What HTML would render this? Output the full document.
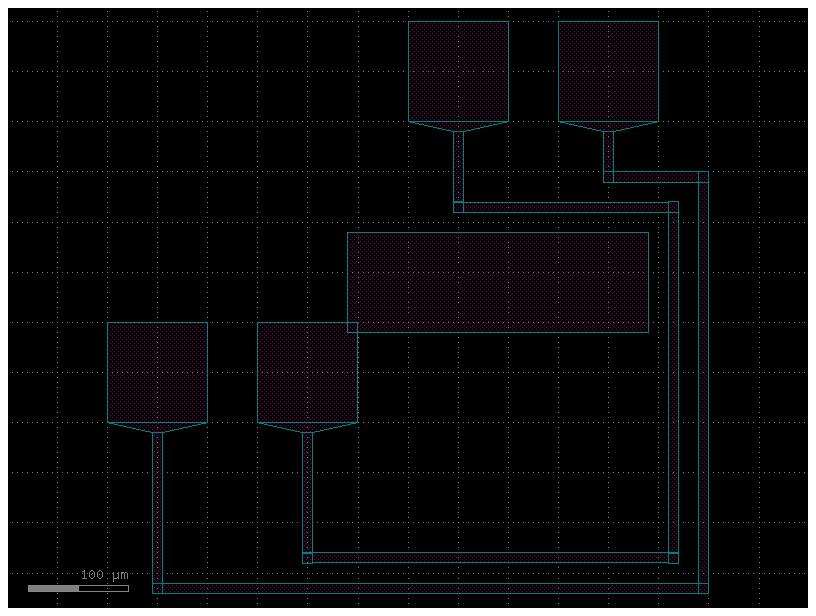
<!DOCTYPE html>
<html><head><meta charset="utf-8"><title>layout</title><style>html,body{margin:0;padding:0;background:#fff;width:816px;height:616px;overflow:hidden;font-family:"Liberation Sans",sans-serif;}</style></head><body><svg width="816" height="616" viewBox="0 0 816 616" shape-rendering="crispEdges" style="position:absolute;left:0;top:0"><defs><pattern id="st" patternUnits="userSpaceOnUse" x="0" y="0" width="4" height="4"><rect x="2" y="3" width="1" height="1" fill="#800057"/><rect x="0" y="1" width="1" height="1" fill="#800057"/></pattern></defs><rect x="0" y="0" width="816" height="616" fill="#ffffff"/><rect x="8" y="8" width="800" height="600" fill="#000000"/><path fill="#808080" d="M57 11h1v1h-1zM107 11h1v1h-1zM157 11h1v1h-1zM207 11h1v1h-1zM257 11h1v1h-1zM307 11h1v1h-1zM358 11h1v1h-1zM408 11h1v1h-1zM458 11h1v1h-1zM508 11h1v1h-1zM558 11h1v1h-1zM608 11h1v1h-1zM658 11h1v1h-1zM708 11h1v1h-1zM759 11h1v1h-1zM57 16h1v1h-1zM107 16h1v1h-1zM157 16h1v1h-1zM207 16h1v1h-1zM257 16h1v1h-1zM307 16h1v1h-1zM358 16h1v1h-1zM408 16h1v1h-1zM458 16h1v1h-1zM508 16h1v1h-1zM558 16h1v1h-1zM608 16h1v1h-1zM658 16h1v1h-1zM708 16h1v1h-1zM759 16h1v1h-1zM12 21h1v1h-1zM17 21h1v1h-1zM22 21h1v1h-1zM27 21h1v1h-1zM32 21h1v1h-1zM37 21h1v1h-1zM42 21h1v1h-1zM47 21h1v1h-1zM52 21h1v1h-1zM57 21h1v1h-1zM62 21h1v1h-1zM67 21h1v1h-1zM72 21h1v1h-1zM77 21h1v1h-1zM82 21h1v1h-1zM87 21h1v1h-1zM92 21h1v1h-1zM97 21h1v1h-1zM102 21h1v1h-1zM107 21h1v1h-1zM112 21h1v1h-1zM117 21h1v1h-1zM122 21h1v1h-1zM127 21h1v1h-1zM132 21h1v1h-1zM137 21h1v1h-1zM142 21h1v1h-1zM147 21h1v1h-1zM152 21h1v1h-1zM157 21h1v1h-1zM162 21h1v1h-1zM167 21h1v1h-1zM172 21h1v1h-1zM177 21h1v1h-1zM182 21h1v1h-1zM187 21h1v1h-1zM192 21h1v1h-1zM197 21h1v1h-1zM202 21h1v1h-1zM207 21h1v1h-1zM212 21h1v1h-1zM217 21h1v1h-1zM222 21h1v1h-1zM227 21h1v1h-1zM232 21h1v1h-1zM237 21h1v1h-1zM242 21h1v1h-1zM247 21h1v1h-1zM252 21h1v1h-1zM257 21h1v1h-1zM262 21h1v1h-1zM267 21h1v1h-1zM272 21h1v1h-1zM277 21h1v1h-1zM282 21h1v1h-1zM287 21h1v1h-1zM292 21h1v1h-1zM297 21h1v1h-1zM302 21h1v1h-1zM307 21h1v1h-1zM312 21h1v1h-1zM317 21h1v1h-1zM322 21h1v1h-1zM327 21h1v1h-1zM332 21h1v1h-1zM337 21h1v1h-1zM342 21h1v1h-1zM347 21h1v1h-1zM352 21h1v1h-1zM358 21h1v1h-1zM363 21h1v1h-1zM368 21h1v1h-1zM373 21h1v1h-1zM378 21h1v1h-1zM383 21h1v1h-1zM388 21h1v1h-1zM393 21h1v1h-1zM398 21h1v1h-1zM403 21h1v1h-1zM408 21h1v1h-1zM413 21h1v1h-1zM418 21h1v1h-1zM423 21h1v1h-1zM428 21h1v1h-1zM433 21h1v1h-1zM438 21h1v1h-1zM443 21h1v1h-1zM448 21h1v1h-1zM453 21h1v1h-1zM458 21h1v1h-1zM463 21h1v1h-1zM468 21h1v1h-1zM473 21h1v1h-1zM478 21h1v1h-1zM483 21h1v1h-1zM488 21h1v1h-1zM493 21h1v1h-1zM498 21h1v1h-1zM503 21h1v1h-1zM508 21h1v1h-1zM513 21h1v1h-1zM518 21h1v1h-1zM523 21h1v1h-1zM528 21h1v1h-1zM533 21h1v1h-1zM538 21h1v1h-1zM543 21h1v1h-1zM548 21h1v1h-1zM553 21h1v1h-1zM558 21h1v1h-1zM563 21h1v1h-1zM568 21h1v1h-1zM573 21h1v1h-1zM578 21h1v1h-1zM583 21h1v1h-1zM588 21h1v1h-1zM593 21h1v1h-1zM598 21h1v1h-1zM603 21h1v1h-1zM608 21h1v1h-1zM613 21h1v1h-1zM618 21h1v1h-1zM623 21h1v1h-1zM628 21h1v1h-1zM633 21h1v1h-1zM638 21h1v1h-1zM643 21h1v1h-1zM648 21h1v1h-1zM653 21h1v1h-1zM658 21h1v1h-1zM663 21h1v1h-1zM668 21h1v1h-1zM673 21h1v1h-1zM678 21h1v1h-1zM683 21h1v1h-1zM688 21h1v1h-1zM693 21h1v1h-1zM698 21h1v1h-1zM703 21h1v1h-1zM708 21h1v1h-1zM713 21h1v1h-1zM718 21h1v1h-1zM723 21h1v1h-1zM728 21h1v1h-1zM733 21h1v1h-1zM738 21h1v1h-1zM743 21h1v1h-1zM748 21h1v1h-1zM753 21h1v1h-1zM759 21h1v1h-1zM764 21h1v1h-1zM769 21h1v1h-1zM774 21h1v1h-1zM779 21h1v1h-1zM784 21h1v1h-1zM789 21h1v1h-1zM794 21h1v1h-1zM799 21h1v1h-1zM804 21h1v1h-1zM57 26h1v1h-1zM107 26h1v1h-1zM157 26h1v1h-1zM207 26h1v1h-1zM257 26h1v1h-1zM307 26h1v1h-1zM358 26h1v1h-1zM408 26h1v1h-1zM458 26h1v1h-1zM508 26h1v1h-1zM558 26h1v1h-1zM608 26h1v1h-1zM658 26h1v1h-1zM708 26h1v1h-1zM759 26h1v1h-1zM57 31h1v1h-1zM107 31h1v1h-1zM157 31h1v1h-1zM207 31h1v1h-1zM257 31h1v1h-1zM307 31h1v1h-1zM358 31h1v1h-1zM408 31h1v1h-1zM458 31h1v1h-1zM508 31h1v1h-1zM558 31h1v1h-1zM608 31h1v1h-1zM658 31h1v1h-1zM708 31h1v1h-1zM759 31h1v1h-1zM57 36h1v1h-1zM107 36h1v1h-1zM157 36h1v1h-1zM207 36h1v1h-1zM257 36h1v1h-1zM307 36h1v1h-1zM358 36h1v1h-1zM408 36h1v1h-1zM458 36h1v1h-1zM508 36h1v1h-1zM558 36h1v1h-1zM608 36h1v1h-1zM658 36h1v1h-1zM708 36h1v1h-1zM759 36h1v1h-1zM57 41h1v1h-1zM107 41h1v1h-1zM157 41h1v1h-1zM207 41h1v1h-1zM257 41h1v1h-1zM307 41h1v1h-1zM358 41h1v1h-1zM408 41h1v1h-1zM458 41h1v1h-1zM508 41h1v1h-1zM558 41h1v1h-1zM608 41h1v1h-1zM658 41h1v1h-1zM708 41h1v1h-1zM759 41h1v1h-1zM57 46h1v1h-1zM107 46h1v1h-1zM157 46h1v1h-1zM207 46h1v1h-1zM257 46h1v1h-1zM307 46h1v1h-1zM358 46h1v1h-1zM408 46h1v1h-1zM458 46h1v1h-1zM508 46h1v1h-1zM558 46h1v1h-1zM608 46h1v1h-1zM658 46h1v1h-1zM708 46h1v1h-1zM759 46h1v1h-1zM57 51h1v1h-1zM107 51h1v1h-1zM157 51h1v1h-1zM207 51h1v1h-1zM257 51h1v1h-1zM307 51h1v1h-1zM358 51h1v1h-1zM408 51h1v1h-1zM458 51h1v1h-1zM508 51h1v1h-1zM558 51h1v1h-1zM608 51h1v1h-1zM658 51h1v1h-1zM708 51h1v1h-1zM759 51h1v1h-1zM57 56h1v1h-1zM107 56h1v1h-1zM157 56h1v1h-1zM207 56h1v1h-1zM257 56h1v1h-1zM307 56h1v1h-1zM358 56h1v1h-1zM408 56h1v1h-1zM458 56h1v1h-1zM508 56h1v1h-1zM558 56h1v1h-1zM608 56h1v1h-1zM658 56h1v1h-1zM708 56h1v1h-1zM759 56h1v1h-1zM57 61h1v1h-1zM107 61h1v1h-1zM157 61h1v1h-1zM207 61h1v1h-1zM257 61h1v1h-1zM307 61h1v1h-1zM358 61h1v1h-1zM408 61h1v1h-1zM458 61h1v1h-1zM508 61h1v1h-1zM558 61h1v1h-1zM608 61h1v1h-1zM658 61h1v1h-1zM708 61h1v1h-1zM759 61h1v1h-1zM57 66h1v1h-1zM107 66h1v1h-1zM157 66h1v1h-1zM207 66h1v1h-1zM257 66h1v1h-1zM307 66h1v1h-1zM358 66h1v1h-1zM408 66h1v1h-1zM458 66h1v1h-1zM508 66h1v1h-1zM558 66h1v1h-1zM608 66h1v1h-1zM658 66h1v1h-1zM708 66h1v1h-1zM759 66h1v1h-1zM12 71h1v1h-1zM17 71h1v1h-1zM22 71h1v1h-1zM27 71h1v1h-1zM32 71h1v1h-1zM37 71h1v1h-1zM42 71h1v1h-1zM47 71h1v1h-1zM52 71h1v1h-1zM57 71h1v1h-1zM62 71h1v1h-1zM67 71h1v1h-1zM72 71h1v1h-1zM77 71h1v1h-1zM82 71h1v1h-1zM87 71h1v1h-1zM92 71h1v1h-1zM97 71h1v1h-1zM102 71h1v1h-1zM107 71h1v1h-1zM112 71h1v1h-1zM117 71h1v1h-1zM122 71h1v1h-1zM127 71h1v1h-1zM132 71h1v1h-1zM137 71h1v1h-1zM142 71h1v1h-1zM147 71h1v1h-1zM152 71h1v1h-1zM157 71h1v1h-1zM162 71h1v1h-1zM167 71h1v1h-1zM172 71h1v1h-1zM177 71h1v1h-1zM182 71h1v1h-1zM187 71h1v1h-1zM192 71h1v1h-1zM197 71h1v1h-1zM202 71h1v1h-1zM207 71h1v1h-1zM212 71h1v1h-1zM217 71h1v1h-1zM222 71h1v1h-1zM227 71h1v1h-1zM232 71h1v1h-1zM237 71h1v1h-1zM242 71h1v1h-1zM247 71h1v1h-1zM252 71h1v1h-1zM257 71h1v1h-1zM262 71h1v1h-1zM267 71h1v1h-1zM272 71h1v1h-1zM277 71h1v1h-1zM282 71h1v1h-1zM287 71h1v1h-1zM292 71h1v1h-1zM297 71h1v1h-1zM302 71h1v1h-1zM307 71h1v1h-1zM312 71h1v1h-1zM317 71h1v1h-1zM322 71h1v1h-1zM327 71h1v1h-1zM332 71h1v1h-1zM337 71h1v1h-1zM342 71h1v1h-1zM347 71h1v1h-1zM352 71h1v1h-1zM358 71h1v1h-1zM363 71h1v1h-1zM368 71h1v1h-1zM373 71h1v1h-1zM378 71h1v1h-1zM383 71h1v1h-1zM388 71h1v1h-1zM393 71h1v1h-1zM398 71h1v1h-1zM403 71h1v1h-1zM408 71h1v1h-1zM413 71h1v1h-1zM418 71h1v1h-1zM423 71h1v1h-1zM428 71h1v1h-1zM433 71h1v1h-1zM438 71h1v1h-1zM443 71h1v1h-1zM448 71h1v1h-1zM453 71h1v1h-1zM458 71h1v1h-1zM463 71h1v1h-1zM468 71h1v1h-1zM473 71h1v1h-1zM478 71h1v1h-1zM483 71h1v1h-1zM488 71h1v1h-1zM493 71h1v1h-1zM498 71h1v1h-1zM503 71h1v1h-1zM508 71h1v1h-1zM513 71h1v1h-1zM518 71h1v1h-1zM523 71h1v1h-1zM528 71h1v1h-1zM533 71h1v1h-1zM538 71h1v1h-1zM543 71h1v1h-1zM548 71h1v1h-1zM553 71h1v1h-1zM558 71h1v1h-1zM563 71h1v1h-1zM568 71h1v1h-1zM573 71h1v1h-1zM578 71h1v1h-1zM583 71h1v1h-1zM588 71h1v1h-1zM593 71h1v1h-1zM598 71h1v1h-1zM603 71h1v1h-1zM608 71h1v1h-1zM613 71h1v1h-1zM618 71h1v1h-1zM623 71h1v1h-1zM628 71h1v1h-1zM633 71h1v1h-1zM638 71h1v1h-1zM643 71h1v1h-1zM648 71h1v1h-1zM653 71h1v1h-1zM658 71h1v1h-1zM663 71h1v1h-1zM668 71h1v1h-1zM673 71h1v1h-1zM678 71h1v1h-1zM683 71h1v1h-1zM688 71h1v1h-1zM693 71h1v1h-1zM698 71h1v1h-1zM703 71h1v1h-1zM708 71h1v1h-1zM713 71h1v1h-1zM718 71h1v1h-1zM723 71h1v1h-1zM728 71h1v1h-1zM733 71h1v1h-1zM738 71h1v1h-1zM743 71h1v1h-1zM748 71h1v1h-1zM753 71h1v1h-1zM759 71h1v1h-1zM764 71h1v1h-1zM769 71h1v1h-1zM774 71h1v1h-1zM779 71h1v1h-1zM784 71h1v1h-1zM789 71h1v1h-1zM794 71h1v1h-1zM799 71h1v1h-1zM804 71h1v1h-1zM57 76h1v1h-1zM107 76h1v1h-1zM157 76h1v1h-1zM207 76h1v1h-1zM257 76h1v1h-1zM307 76h1v1h-1zM358 76h1v1h-1zM408 76h1v1h-1zM458 76h1v1h-1zM508 76h1v1h-1zM558 76h1v1h-1zM608 76h1v1h-1zM658 76h1v1h-1zM708 76h1v1h-1zM759 76h1v1h-1zM57 81h1v1h-1zM107 81h1v1h-1zM157 81h1v1h-1zM207 81h1v1h-1zM257 81h1v1h-1zM307 81h1v1h-1zM358 81h1v1h-1zM408 81h1v1h-1zM458 81h1v1h-1zM508 81h1v1h-1zM558 81h1v1h-1zM608 81h1v1h-1zM658 81h1v1h-1zM708 81h1v1h-1zM759 81h1v1h-1zM57 86h1v1h-1zM107 86h1v1h-1zM157 86h1v1h-1zM207 86h1v1h-1zM257 86h1v1h-1zM307 86h1v1h-1zM358 86h1v1h-1zM408 86h1v1h-1zM458 86h1v1h-1zM508 86h1v1h-1zM558 86h1v1h-1zM608 86h1v1h-1zM658 86h1v1h-1zM708 86h1v1h-1zM759 86h1v1h-1zM57 91h1v1h-1zM107 91h1v1h-1zM157 91h1v1h-1zM207 91h1v1h-1zM257 91h1v1h-1zM307 91h1v1h-1zM358 91h1v1h-1zM408 91h1v1h-1zM458 91h1v1h-1zM508 91h1v1h-1zM558 91h1v1h-1zM608 91h1v1h-1zM658 91h1v1h-1zM708 91h1v1h-1zM759 91h1v1h-1zM57 96h1v1h-1zM107 96h1v1h-1zM157 96h1v1h-1zM207 96h1v1h-1zM257 96h1v1h-1zM307 96h1v1h-1zM358 96h1v1h-1zM408 96h1v1h-1zM458 96h1v1h-1zM508 96h1v1h-1zM558 96h1v1h-1zM608 96h1v1h-1zM658 96h1v1h-1zM708 96h1v1h-1zM759 96h1v1h-1zM57 101h1v1h-1zM107 101h1v1h-1zM157 101h1v1h-1zM207 101h1v1h-1zM257 101h1v1h-1zM307 101h1v1h-1zM358 101h1v1h-1zM408 101h1v1h-1zM458 101h1v1h-1zM508 101h1v1h-1zM558 101h1v1h-1zM608 101h1v1h-1zM658 101h1v1h-1zM708 101h1v1h-1zM759 101h1v1h-1zM57 106h1v1h-1zM107 106h1v1h-1zM157 106h1v1h-1zM207 106h1v1h-1zM257 106h1v1h-1zM307 106h1v1h-1zM358 106h1v1h-1zM408 106h1v1h-1zM458 106h1v1h-1zM508 106h1v1h-1zM558 106h1v1h-1zM608 106h1v1h-1zM658 106h1v1h-1zM708 106h1v1h-1zM759 106h1v1h-1zM57 111h1v1h-1zM107 111h1v1h-1zM157 111h1v1h-1zM207 111h1v1h-1zM257 111h1v1h-1zM307 111h1v1h-1zM358 111h1v1h-1zM408 111h1v1h-1zM458 111h1v1h-1zM508 111h1v1h-1zM558 111h1v1h-1zM608 111h1v1h-1zM658 111h1v1h-1zM708 111h1v1h-1zM759 111h1v1h-1zM57 116h1v1h-1zM107 116h1v1h-1zM157 116h1v1h-1zM207 116h1v1h-1zM257 116h1v1h-1zM307 116h1v1h-1zM358 116h1v1h-1zM408 116h1v1h-1zM458 116h1v1h-1zM508 116h1v1h-1zM558 116h1v1h-1zM608 116h1v1h-1zM658 116h1v1h-1zM708 116h1v1h-1zM759 116h1v1h-1zM12 121h1v1h-1zM17 121h1v1h-1zM22 121h1v1h-1zM27 121h1v1h-1zM32 121h1v1h-1zM37 121h1v1h-1zM42 121h1v1h-1zM47 121h1v1h-1zM52 121h1v1h-1zM57 121h1v1h-1zM62 121h1v1h-1zM67 121h1v1h-1zM72 121h1v1h-1zM77 121h1v1h-1zM82 121h1v1h-1zM87 121h1v1h-1zM92 121h1v1h-1zM97 121h1v1h-1zM102 121h1v1h-1zM107 121h1v1h-1zM112 121h1v1h-1zM117 121h1v1h-1zM122 121h1v1h-1zM127 121h1v1h-1zM132 121h1v1h-1zM137 121h1v1h-1zM142 121h1v1h-1zM147 121h1v1h-1zM152 121h1v1h-1zM157 121h1v1h-1zM162 121h1v1h-1zM167 121h1v1h-1zM172 121h1v1h-1zM177 121h1v1h-1zM182 121h1v1h-1zM187 121h1v1h-1zM192 121h1v1h-1zM197 121h1v1h-1zM202 121h1v1h-1zM207 121h1v1h-1zM212 121h1v1h-1zM217 121h1v1h-1zM222 121h1v1h-1zM227 121h1v1h-1zM232 121h1v1h-1zM237 121h1v1h-1zM242 121h1v1h-1zM247 121h1v1h-1zM252 121h1v1h-1zM257 121h1v1h-1zM262 121h1v1h-1zM267 121h1v1h-1zM272 121h1v1h-1zM277 121h1v1h-1zM282 121h1v1h-1zM287 121h1v1h-1zM292 121h1v1h-1zM297 121h1v1h-1zM302 121h1v1h-1zM307 121h1v1h-1zM312 121h1v1h-1zM317 121h1v1h-1zM322 121h1v1h-1zM327 121h1v1h-1zM332 121h1v1h-1zM337 121h1v1h-1zM342 121h1v1h-1zM347 121h1v1h-1zM352 121h1v1h-1zM358 121h1v1h-1zM363 121h1v1h-1zM368 121h1v1h-1zM373 121h1v1h-1zM378 121h1v1h-1zM383 121h1v1h-1zM388 121h1v1h-1zM393 121h1v1h-1zM398 121h1v1h-1zM403 121h1v1h-1zM408 121h1v1h-1zM413 121h1v1h-1zM418 121h1v1h-1zM423 121h1v1h-1zM428 121h1v1h-1zM433 121h1v1h-1zM438 121h1v1h-1zM443 121h1v1h-1zM448 121h1v1h-1zM453 121h1v1h-1zM458 121h1v1h-1zM463 121h1v1h-1zM468 121h1v1h-1zM473 121h1v1h-1zM478 121h1v1h-1zM483 121h1v1h-1zM488 121h1v1h-1zM493 121h1v1h-1zM498 121h1v1h-1zM503 121h1v1h-1zM508 121h1v1h-1zM513 121h1v1h-1zM518 121h1v1h-1zM523 121h1v1h-1zM528 121h1v1h-1zM533 121h1v1h-1zM538 121h1v1h-1zM543 121h1v1h-1zM548 121h1v1h-1zM553 121h1v1h-1zM558 121h1v1h-1zM563 121h1v1h-1zM568 121h1v1h-1zM573 121h1v1h-1zM578 121h1v1h-1zM583 121h1v1h-1zM588 121h1v1h-1zM593 121h1v1h-1zM598 121h1v1h-1zM603 121h1v1h-1zM608 121h1v1h-1zM613 121h1v1h-1zM618 121h1v1h-1zM623 121h1v1h-1zM628 121h1v1h-1zM633 121h1v1h-1zM638 121h1v1h-1zM643 121h1v1h-1zM648 121h1v1h-1zM653 121h1v1h-1zM658 121h1v1h-1zM663 121h1v1h-1zM668 121h1v1h-1zM673 121h1v1h-1zM678 121h1v1h-1zM683 121h1v1h-1zM688 121h1v1h-1zM693 121h1v1h-1zM698 121h1v1h-1zM703 121h1v1h-1zM708 121h1v1h-1zM713 121h1v1h-1zM718 121h1v1h-1zM723 121h1v1h-1zM728 121h1v1h-1zM733 121h1v1h-1zM738 121h1v1h-1zM743 121h1v1h-1zM748 121h1v1h-1zM753 121h1v1h-1zM759 121h1v1h-1zM764 121h1v1h-1zM769 121h1v1h-1zM774 121h1v1h-1zM779 121h1v1h-1zM784 121h1v1h-1zM789 121h1v1h-1zM794 121h1v1h-1zM799 121h1v1h-1zM804 121h1v1h-1zM57 126h1v1h-1zM107 126h1v1h-1zM157 126h1v1h-1zM207 126h1v1h-1zM257 126h1v1h-1zM307 126h1v1h-1zM358 126h1v1h-1zM408 126h1v1h-1zM458 126h1v1h-1zM508 126h1v1h-1zM558 126h1v1h-1zM608 126h1v1h-1zM658 126h1v1h-1zM708 126h1v1h-1zM759 126h1v1h-1zM57 131h1v1h-1zM107 131h1v1h-1zM157 131h1v1h-1zM207 131h1v1h-1zM257 131h1v1h-1zM307 131h1v1h-1zM358 131h1v1h-1zM408 131h1v1h-1zM458 131h1v1h-1zM508 131h1v1h-1zM558 131h1v1h-1zM608 131h1v1h-1zM658 131h1v1h-1zM708 131h1v1h-1zM759 131h1v1h-1zM57 136h1v1h-1zM107 136h1v1h-1zM157 136h1v1h-1zM207 136h1v1h-1zM257 136h1v1h-1zM307 136h1v1h-1zM358 136h1v1h-1zM408 136h1v1h-1zM458 136h1v1h-1zM508 136h1v1h-1zM558 136h1v1h-1zM608 136h1v1h-1zM658 136h1v1h-1zM708 136h1v1h-1zM759 136h1v1h-1zM57 141h1v1h-1zM107 141h1v1h-1zM157 141h1v1h-1zM207 141h1v1h-1zM257 141h1v1h-1zM307 141h1v1h-1zM358 141h1v1h-1zM408 141h1v1h-1zM458 141h1v1h-1zM508 141h1v1h-1zM558 141h1v1h-1zM608 141h1v1h-1zM658 141h1v1h-1zM708 141h1v1h-1zM759 141h1v1h-1zM57 146h1v1h-1zM107 146h1v1h-1zM157 146h1v1h-1zM207 146h1v1h-1zM257 146h1v1h-1zM307 146h1v1h-1zM358 146h1v1h-1zM408 146h1v1h-1zM458 146h1v1h-1zM508 146h1v1h-1zM558 146h1v1h-1zM608 146h1v1h-1zM658 146h1v1h-1zM708 146h1v1h-1zM759 146h1v1h-1zM57 151h1v1h-1zM107 151h1v1h-1zM157 151h1v1h-1zM207 151h1v1h-1zM257 151h1v1h-1zM307 151h1v1h-1zM358 151h1v1h-1zM408 151h1v1h-1zM458 151h1v1h-1zM508 151h1v1h-1zM558 151h1v1h-1zM608 151h1v1h-1zM658 151h1v1h-1zM708 151h1v1h-1zM759 151h1v1h-1zM57 156h1v1h-1zM107 156h1v1h-1zM157 156h1v1h-1zM207 156h1v1h-1zM257 156h1v1h-1zM307 156h1v1h-1zM358 156h1v1h-1zM408 156h1v1h-1zM458 156h1v1h-1zM508 156h1v1h-1zM558 156h1v1h-1zM608 156h1v1h-1zM658 156h1v1h-1zM708 156h1v1h-1zM759 156h1v1h-1zM57 161h1v1h-1zM107 161h1v1h-1zM157 161h1v1h-1zM207 161h1v1h-1zM257 161h1v1h-1zM307 161h1v1h-1zM358 161h1v1h-1zM408 161h1v1h-1zM458 161h1v1h-1zM508 161h1v1h-1zM558 161h1v1h-1zM608 161h1v1h-1zM658 161h1v1h-1zM708 161h1v1h-1zM759 161h1v1h-1zM57 166h1v1h-1zM107 166h1v1h-1zM157 166h1v1h-1zM207 166h1v1h-1zM257 166h1v1h-1zM307 166h1v1h-1zM358 166h1v1h-1zM408 166h1v1h-1zM458 166h1v1h-1zM508 166h1v1h-1zM558 166h1v1h-1zM608 166h1v1h-1zM658 166h1v1h-1zM708 166h1v1h-1zM759 166h1v1h-1zM12 171h1v1h-1zM17 171h1v1h-1zM22 171h1v1h-1zM27 171h1v1h-1zM32 171h1v1h-1zM37 171h1v1h-1zM42 171h1v1h-1zM47 171h1v1h-1zM52 171h1v1h-1zM57 171h1v1h-1zM62 171h1v1h-1zM67 171h1v1h-1zM72 171h1v1h-1zM77 171h1v1h-1zM82 171h1v1h-1zM87 171h1v1h-1zM92 171h1v1h-1zM97 171h1v1h-1zM102 171h1v1h-1zM107 171h1v1h-1zM112 171h1v1h-1zM117 171h1v1h-1zM122 171h1v1h-1zM127 171h1v1h-1zM132 171h1v1h-1zM137 171h1v1h-1zM142 171h1v1h-1zM147 171h1v1h-1zM152 171h1v1h-1zM157 171h1v1h-1zM162 171h1v1h-1zM167 171h1v1h-1zM172 171h1v1h-1zM177 171h1v1h-1zM182 171h1v1h-1zM187 171h1v1h-1zM192 171h1v1h-1zM197 171h1v1h-1zM202 171h1v1h-1zM207 171h1v1h-1zM212 171h1v1h-1zM217 171h1v1h-1zM222 171h1v1h-1zM227 171h1v1h-1zM232 171h1v1h-1zM237 171h1v1h-1zM242 171h1v1h-1zM247 171h1v1h-1zM252 171h1v1h-1zM257 171h1v1h-1zM262 171h1v1h-1zM267 171h1v1h-1zM272 171h1v1h-1zM277 171h1v1h-1zM282 171h1v1h-1zM287 171h1v1h-1zM292 171h1v1h-1zM297 171h1v1h-1zM302 171h1v1h-1zM307 171h1v1h-1zM312 171h1v1h-1zM317 171h1v1h-1zM322 171h1v1h-1zM327 171h1v1h-1zM332 171h1v1h-1zM337 171h1v1h-1zM342 171h1v1h-1zM347 171h1v1h-1zM352 171h1v1h-1zM358 171h1v1h-1zM363 171h1v1h-1zM368 171h1v1h-1zM373 171h1v1h-1zM378 171h1v1h-1zM383 171h1v1h-1zM388 171h1v1h-1zM393 171h1v1h-1zM398 171h1v1h-1zM403 171h1v1h-1zM408 171h1v1h-1zM413 171h1v1h-1zM418 171h1v1h-1zM423 171h1v1h-1zM428 171h1v1h-1zM433 171h1v1h-1zM438 171h1v1h-1zM443 171h1v1h-1zM448 171h1v1h-1zM453 171h1v1h-1zM458 171h1v1h-1zM463 171h1v1h-1zM468 171h1v1h-1zM473 171h1v1h-1zM478 171h1v1h-1zM483 171h1v1h-1zM488 171h1v1h-1zM493 171h1v1h-1zM498 171h1v1h-1zM503 171h1v1h-1zM508 171h1v1h-1zM513 171h1v1h-1zM518 171h1v1h-1zM523 171h1v1h-1zM528 171h1v1h-1zM533 171h1v1h-1zM538 171h1v1h-1zM543 171h1v1h-1zM548 171h1v1h-1zM553 171h1v1h-1zM558 171h1v1h-1zM563 171h1v1h-1zM568 171h1v1h-1zM573 171h1v1h-1zM578 171h1v1h-1zM583 171h1v1h-1zM588 171h1v1h-1zM593 171h1v1h-1zM598 171h1v1h-1zM603 171h1v1h-1zM608 171h1v1h-1zM613 171h1v1h-1zM618 171h1v1h-1zM623 171h1v1h-1zM628 171h1v1h-1zM633 171h1v1h-1zM638 171h1v1h-1zM643 171h1v1h-1zM648 171h1v1h-1zM653 171h1v1h-1zM658 171h1v1h-1zM663 171h1v1h-1zM668 171h1v1h-1zM673 171h1v1h-1zM678 171h1v1h-1zM683 171h1v1h-1zM688 171h1v1h-1zM693 171h1v1h-1zM698 171h1v1h-1zM703 171h1v1h-1zM708 171h1v1h-1zM713 171h1v1h-1zM718 171h1v1h-1zM723 171h1v1h-1zM728 171h1v1h-1zM733 171h1v1h-1zM738 171h1v1h-1zM743 171h1v1h-1zM748 171h1v1h-1zM753 171h1v1h-1zM759 171h1v1h-1zM764 171h1v1h-1zM769 171h1v1h-1zM774 171h1v1h-1zM779 171h1v1h-1zM784 171h1v1h-1zM789 171h1v1h-1zM794 171h1v1h-1zM799 171h1v1h-1zM804 171h1v1h-1zM57 177h1v1h-1zM107 177h1v1h-1zM157 177h1v1h-1zM207 177h1v1h-1zM257 177h1v1h-1zM307 177h1v1h-1zM358 177h1v1h-1zM408 177h1v1h-1zM458 177h1v1h-1zM508 177h1v1h-1zM558 177h1v1h-1zM608 177h1v1h-1zM658 177h1v1h-1zM708 177h1v1h-1zM759 177h1v1h-1zM57 182h1v1h-1zM107 182h1v1h-1zM157 182h1v1h-1zM207 182h1v1h-1zM257 182h1v1h-1zM307 182h1v1h-1zM358 182h1v1h-1zM408 182h1v1h-1zM458 182h1v1h-1zM508 182h1v1h-1zM558 182h1v1h-1zM608 182h1v1h-1zM658 182h1v1h-1zM708 182h1v1h-1zM759 182h1v1h-1zM57 187h1v1h-1zM107 187h1v1h-1zM157 187h1v1h-1zM207 187h1v1h-1zM257 187h1v1h-1zM307 187h1v1h-1zM358 187h1v1h-1zM408 187h1v1h-1zM458 187h1v1h-1zM508 187h1v1h-1zM558 187h1v1h-1zM608 187h1v1h-1zM658 187h1v1h-1zM708 187h1v1h-1zM759 187h1v1h-1zM57 192h1v1h-1zM107 192h1v1h-1zM157 192h1v1h-1zM207 192h1v1h-1zM257 192h1v1h-1zM307 192h1v1h-1zM358 192h1v1h-1zM408 192h1v1h-1zM458 192h1v1h-1zM508 192h1v1h-1zM558 192h1v1h-1zM608 192h1v1h-1zM658 192h1v1h-1zM708 192h1v1h-1zM759 192h1v1h-1zM57 197h1v1h-1zM107 197h1v1h-1zM157 197h1v1h-1zM207 197h1v1h-1zM257 197h1v1h-1zM307 197h1v1h-1zM358 197h1v1h-1zM408 197h1v1h-1zM458 197h1v1h-1zM508 197h1v1h-1zM558 197h1v1h-1zM608 197h1v1h-1zM658 197h1v1h-1zM708 197h1v1h-1zM759 197h1v1h-1zM57 202h1v1h-1zM107 202h1v1h-1zM157 202h1v1h-1zM207 202h1v1h-1zM257 202h1v1h-1zM307 202h1v1h-1zM358 202h1v1h-1zM408 202h1v1h-1zM458 202h1v1h-1zM508 202h1v1h-1zM558 202h1v1h-1zM608 202h1v1h-1zM658 202h1v1h-1zM708 202h1v1h-1zM759 202h1v1h-1zM57 207h1v1h-1zM107 207h1v1h-1zM157 207h1v1h-1zM207 207h1v1h-1zM257 207h1v1h-1zM307 207h1v1h-1zM358 207h1v1h-1zM408 207h1v1h-1zM458 207h1v1h-1zM508 207h1v1h-1zM558 207h1v1h-1zM608 207h1v1h-1zM658 207h1v1h-1zM708 207h1v1h-1zM759 207h1v1h-1zM57 212h1v1h-1zM107 212h1v1h-1zM157 212h1v1h-1zM207 212h1v1h-1zM257 212h1v1h-1zM307 212h1v1h-1zM358 212h1v1h-1zM408 212h1v1h-1zM458 212h1v1h-1zM508 212h1v1h-1zM558 212h1v1h-1zM608 212h1v1h-1zM658 212h1v1h-1zM708 212h1v1h-1zM759 212h1v1h-1zM57 217h1v1h-1zM107 217h1v1h-1zM157 217h1v1h-1zM207 217h1v1h-1zM257 217h1v1h-1zM307 217h1v1h-1zM358 217h1v1h-1zM408 217h1v1h-1zM458 217h1v1h-1zM508 217h1v1h-1zM558 217h1v1h-1zM608 217h1v1h-1zM658 217h1v1h-1zM708 217h1v1h-1zM759 217h1v1h-1zM12 222h1v1h-1zM17 222h1v1h-1zM22 222h1v1h-1zM27 222h1v1h-1zM32 222h1v1h-1zM37 222h1v1h-1zM42 222h1v1h-1zM47 222h1v1h-1zM52 222h1v1h-1zM57 222h1v1h-1zM62 222h1v1h-1zM67 222h1v1h-1zM72 222h1v1h-1zM77 222h1v1h-1zM82 222h1v1h-1zM87 222h1v1h-1zM92 222h1v1h-1zM97 222h1v1h-1zM102 222h1v1h-1zM107 222h1v1h-1zM112 222h1v1h-1zM117 222h1v1h-1zM122 222h1v1h-1zM127 222h1v1h-1zM132 222h1v1h-1zM137 222h1v1h-1zM142 222h1v1h-1zM147 222h1v1h-1zM152 222h1v1h-1zM157 222h1v1h-1zM162 222h1v1h-1zM167 222h1v1h-1zM172 222h1v1h-1zM177 222h1v1h-1zM182 222h1v1h-1zM187 222h1v1h-1zM192 222h1v1h-1zM197 222h1v1h-1zM202 222h1v1h-1zM207 222h1v1h-1zM212 222h1v1h-1zM217 222h1v1h-1zM222 222h1v1h-1zM227 222h1v1h-1zM232 222h1v1h-1zM237 222h1v1h-1zM242 222h1v1h-1zM247 222h1v1h-1zM252 222h1v1h-1zM257 222h1v1h-1zM262 222h1v1h-1zM267 222h1v1h-1zM272 222h1v1h-1zM277 222h1v1h-1zM282 222h1v1h-1zM287 222h1v1h-1zM292 222h1v1h-1zM297 222h1v1h-1zM302 222h1v1h-1zM307 222h1v1h-1zM312 222h1v1h-1zM317 222h1v1h-1zM322 222h1v1h-1zM327 222h1v1h-1zM332 222h1v1h-1zM337 222h1v1h-1zM342 222h1v1h-1zM347 222h1v1h-1zM352 222h1v1h-1zM358 222h1v1h-1zM363 222h1v1h-1zM368 222h1v1h-1zM373 222h1v1h-1zM378 222h1v1h-1zM383 222h1v1h-1zM388 222h1v1h-1zM393 222h1v1h-1zM398 222h1v1h-1zM403 222h1v1h-1zM408 222h1v1h-1zM413 222h1v1h-1zM418 222h1v1h-1zM423 222h1v1h-1zM428 222h1v1h-1zM433 222h1v1h-1zM438 222h1v1h-1zM443 222h1v1h-1zM448 222h1v1h-1zM453 222h1v1h-1zM458 222h1v1h-1zM463 222h1v1h-1zM468 222h1v1h-1zM473 222h1v1h-1zM478 222h1v1h-1zM483 222h1v1h-1zM488 222h1v1h-1zM493 222h1v1h-1zM498 222h1v1h-1zM503 222h1v1h-1zM508 222h1v1h-1zM513 222h1v1h-1zM518 222h1v1h-1zM523 222h1v1h-1zM528 222h1v1h-1zM533 222h1v1h-1zM538 222h1v1h-1zM543 222h1v1h-1zM548 222h1v1h-1zM553 222h1v1h-1zM558 222h1v1h-1zM563 222h1v1h-1zM568 222h1v1h-1zM573 222h1v1h-1zM578 222h1v1h-1zM583 222h1v1h-1zM588 222h1v1h-1zM593 222h1v1h-1zM598 222h1v1h-1zM603 222h1v1h-1zM608 222h1v1h-1zM613 222h1v1h-1zM618 222h1v1h-1zM623 222h1v1h-1zM628 222h1v1h-1zM633 222h1v1h-1zM638 222h1v1h-1zM643 222h1v1h-1zM648 222h1v1h-1zM653 222h1v1h-1zM658 222h1v1h-1zM663 222h1v1h-1zM668 222h1v1h-1zM673 222h1v1h-1zM678 222h1v1h-1zM683 222h1v1h-1zM688 222h1v1h-1zM693 222h1v1h-1zM698 222h1v1h-1zM703 222h1v1h-1zM708 222h1v1h-1zM713 222h1v1h-1zM718 222h1v1h-1zM723 222h1v1h-1zM728 222h1v1h-1zM733 222h1v1h-1zM738 222h1v1h-1zM743 222h1v1h-1zM748 222h1v1h-1zM753 222h1v1h-1zM759 222h1v1h-1zM764 222h1v1h-1zM769 222h1v1h-1zM774 222h1v1h-1zM779 222h1v1h-1zM784 222h1v1h-1zM789 222h1v1h-1zM794 222h1v1h-1zM799 222h1v1h-1zM804 222h1v1h-1zM57 227h1v1h-1zM107 227h1v1h-1zM157 227h1v1h-1zM207 227h1v1h-1zM257 227h1v1h-1zM307 227h1v1h-1zM358 227h1v1h-1zM408 227h1v1h-1zM458 227h1v1h-1zM508 227h1v1h-1zM558 227h1v1h-1zM608 227h1v1h-1zM658 227h1v1h-1zM708 227h1v1h-1zM759 227h1v1h-1zM57 232h1v1h-1zM107 232h1v1h-1zM157 232h1v1h-1zM207 232h1v1h-1zM257 232h1v1h-1zM307 232h1v1h-1zM358 232h1v1h-1zM408 232h1v1h-1zM458 232h1v1h-1zM508 232h1v1h-1zM558 232h1v1h-1zM608 232h1v1h-1zM658 232h1v1h-1zM708 232h1v1h-1zM759 232h1v1h-1zM57 237h1v1h-1zM107 237h1v1h-1zM157 237h1v1h-1zM207 237h1v1h-1zM257 237h1v1h-1zM307 237h1v1h-1zM358 237h1v1h-1zM408 237h1v1h-1zM458 237h1v1h-1zM508 237h1v1h-1zM558 237h1v1h-1zM608 237h1v1h-1zM658 237h1v1h-1zM708 237h1v1h-1zM759 237h1v1h-1zM57 242h1v1h-1zM107 242h1v1h-1zM157 242h1v1h-1zM207 242h1v1h-1zM257 242h1v1h-1zM307 242h1v1h-1zM358 242h1v1h-1zM408 242h1v1h-1zM458 242h1v1h-1zM508 242h1v1h-1zM558 242h1v1h-1zM608 242h1v1h-1zM658 242h1v1h-1zM708 242h1v1h-1zM759 242h1v1h-1zM57 247h1v1h-1zM107 247h1v1h-1zM157 247h1v1h-1zM207 247h1v1h-1zM257 247h1v1h-1zM307 247h1v1h-1zM358 247h1v1h-1zM408 247h1v1h-1zM458 247h1v1h-1zM508 247h1v1h-1zM558 247h1v1h-1zM608 247h1v1h-1zM658 247h1v1h-1zM708 247h1v1h-1zM759 247h1v1h-1zM57 252h1v1h-1zM107 252h1v1h-1zM157 252h1v1h-1zM207 252h1v1h-1zM257 252h1v1h-1zM307 252h1v1h-1zM358 252h1v1h-1zM408 252h1v1h-1zM458 252h1v1h-1zM508 252h1v1h-1zM558 252h1v1h-1zM608 252h1v1h-1zM658 252h1v1h-1zM708 252h1v1h-1zM759 252h1v1h-1zM57 257h1v1h-1zM107 257h1v1h-1zM157 257h1v1h-1zM207 257h1v1h-1zM257 257h1v1h-1zM307 257h1v1h-1zM358 257h1v1h-1zM408 257h1v1h-1zM458 257h1v1h-1zM508 257h1v1h-1zM558 257h1v1h-1zM608 257h1v1h-1zM658 257h1v1h-1zM708 257h1v1h-1zM759 257h1v1h-1zM57 262h1v1h-1zM107 262h1v1h-1zM157 262h1v1h-1zM207 262h1v1h-1zM257 262h1v1h-1zM307 262h1v1h-1zM358 262h1v1h-1zM408 262h1v1h-1zM458 262h1v1h-1zM508 262h1v1h-1zM558 262h1v1h-1zM608 262h1v1h-1zM658 262h1v1h-1zM708 262h1v1h-1zM759 262h1v1h-1zM57 267h1v1h-1zM107 267h1v1h-1zM157 267h1v1h-1zM207 267h1v1h-1zM257 267h1v1h-1zM307 267h1v1h-1zM358 267h1v1h-1zM408 267h1v1h-1zM458 267h1v1h-1zM508 267h1v1h-1zM558 267h1v1h-1zM608 267h1v1h-1zM658 267h1v1h-1zM708 267h1v1h-1zM759 267h1v1h-1zM12 272h1v1h-1zM17 272h1v1h-1zM22 272h1v1h-1zM27 272h1v1h-1zM32 272h1v1h-1zM37 272h1v1h-1zM42 272h1v1h-1zM47 272h1v1h-1zM52 272h1v1h-1zM57 272h1v1h-1zM62 272h1v1h-1zM67 272h1v1h-1zM72 272h1v1h-1zM77 272h1v1h-1zM82 272h1v1h-1zM87 272h1v1h-1zM92 272h1v1h-1zM97 272h1v1h-1zM102 272h1v1h-1zM107 272h1v1h-1zM112 272h1v1h-1zM117 272h1v1h-1zM122 272h1v1h-1zM127 272h1v1h-1zM132 272h1v1h-1zM137 272h1v1h-1zM142 272h1v1h-1zM147 272h1v1h-1zM152 272h1v1h-1zM157 272h1v1h-1zM162 272h1v1h-1zM167 272h1v1h-1zM172 272h1v1h-1zM177 272h1v1h-1zM182 272h1v1h-1zM187 272h1v1h-1zM192 272h1v1h-1zM197 272h1v1h-1zM202 272h1v1h-1zM207 272h1v1h-1zM212 272h1v1h-1zM217 272h1v1h-1zM222 272h1v1h-1zM227 272h1v1h-1zM232 272h1v1h-1zM237 272h1v1h-1zM242 272h1v1h-1zM247 272h1v1h-1zM252 272h1v1h-1zM257 272h1v1h-1zM262 272h1v1h-1zM267 272h1v1h-1zM272 272h1v1h-1zM277 272h1v1h-1zM282 272h1v1h-1zM287 272h1v1h-1zM292 272h1v1h-1zM297 272h1v1h-1zM302 272h1v1h-1zM307 272h1v1h-1zM312 272h1v1h-1zM317 272h1v1h-1zM322 272h1v1h-1zM327 272h1v1h-1zM332 272h1v1h-1zM337 272h1v1h-1zM342 272h1v1h-1zM347 272h1v1h-1zM352 272h1v1h-1zM358 272h1v1h-1zM363 272h1v1h-1zM368 272h1v1h-1zM373 272h1v1h-1zM378 272h1v1h-1zM383 272h1v1h-1zM388 272h1v1h-1zM393 272h1v1h-1zM398 272h1v1h-1zM403 272h1v1h-1zM408 272h1v1h-1zM413 272h1v1h-1zM418 272h1v1h-1zM423 272h1v1h-1zM428 272h1v1h-1zM433 272h1v1h-1zM438 272h1v1h-1zM443 272h1v1h-1zM448 272h1v1h-1zM453 272h1v1h-1zM458 272h1v1h-1zM463 272h1v1h-1zM468 272h1v1h-1zM473 272h1v1h-1zM478 272h1v1h-1zM483 272h1v1h-1zM488 272h1v1h-1zM493 272h1v1h-1zM498 272h1v1h-1zM503 272h1v1h-1zM508 272h1v1h-1zM513 272h1v1h-1zM518 272h1v1h-1zM523 272h1v1h-1zM528 272h1v1h-1zM533 272h1v1h-1zM538 272h1v1h-1zM543 272h1v1h-1zM548 272h1v1h-1zM553 272h1v1h-1zM558 272h1v1h-1zM563 272h1v1h-1zM568 272h1v1h-1zM573 272h1v1h-1zM578 272h1v1h-1zM583 272h1v1h-1zM588 272h1v1h-1zM593 272h1v1h-1zM598 272h1v1h-1zM603 272h1v1h-1zM608 272h1v1h-1zM613 272h1v1h-1zM618 272h1v1h-1zM623 272h1v1h-1zM628 272h1v1h-1zM633 272h1v1h-1zM638 272h1v1h-1zM643 272h1v1h-1zM648 272h1v1h-1zM653 272h1v1h-1zM658 272h1v1h-1zM663 272h1v1h-1zM668 272h1v1h-1zM673 272h1v1h-1zM678 272h1v1h-1zM683 272h1v1h-1zM688 272h1v1h-1zM693 272h1v1h-1zM698 272h1v1h-1zM703 272h1v1h-1zM708 272h1v1h-1zM713 272h1v1h-1zM718 272h1v1h-1zM723 272h1v1h-1zM728 272h1v1h-1zM733 272h1v1h-1zM738 272h1v1h-1zM743 272h1v1h-1zM748 272h1v1h-1zM753 272h1v1h-1zM759 272h1v1h-1zM764 272h1v1h-1zM769 272h1v1h-1zM774 272h1v1h-1zM779 272h1v1h-1zM784 272h1v1h-1zM789 272h1v1h-1zM794 272h1v1h-1zM799 272h1v1h-1zM804 272h1v1h-1zM57 277h1v1h-1zM107 277h1v1h-1zM157 277h1v1h-1zM207 277h1v1h-1zM257 277h1v1h-1zM307 277h1v1h-1zM358 277h1v1h-1zM408 277h1v1h-1zM458 277h1v1h-1zM508 277h1v1h-1zM558 277h1v1h-1zM608 277h1v1h-1zM658 277h1v1h-1zM708 277h1v1h-1zM759 277h1v1h-1zM57 282h1v1h-1zM107 282h1v1h-1zM157 282h1v1h-1zM207 282h1v1h-1zM257 282h1v1h-1zM307 282h1v1h-1zM358 282h1v1h-1zM408 282h1v1h-1zM458 282h1v1h-1zM508 282h1v1h-1zM558 282h1v1h-1zM608 282h1v1h-1zM658 282h1v1h-1zM708 282h1v1h-1zM759 282h1v1h-1zM57 287h1v1h-1zM107 287h1v1h-1zM157 287h1v1h-1zM207 287h1v1h-1zM257 287h1v1h-1zM307 287h1v1h-1zM358 287h1v1h-1zM408 287h1v1h-1zM458 287h1v1h-1zM508 287h1v1h-1zM558 287h1v1h-1zM608 287h1v1h-1zM658 287h1v1h-1zM708 287h1v1h-1zM759 287h1v1h-1zM57 292h1v1h-1zM107 292h1v1h-1zM157 292h1v1h-1zM207 292h1v1h-1zM257 292h1v1h-1zM307 292h1v1h-1zM358 292h1v1h-1zM408 292h1v1h-1zM458 292h1v1h-1zM508 292h1v1h-1zM558 292h1v1h-1zM608 292h1v1h-1zM658 292h1v1h-1zM708 292h1v1h-1zM759 292h1v1h-1zM57 297h1v1h-1zM107 297h1v1h-1zM157 297h1v1h-1zM207 297h1v1h-1zM257 297h1v1h-1zM307 297h1v1h-1zM358 297h1v1h-1zM408 297h1v1h-1zM458 297h1v1h-1zM508 297h1v1h-1zM558 297h1v1h-1zM608 297h1v1h-1zM658 297h1v1h-1zM708 297h1v1h-1zM759 297h1v1h-1zM57 302h1v1h-1zM107 302h1v1h-1zM157 302h1v1h-1zM207 302h1v1h-1zM257 302h1v1h-1zM307 302h1v1h-1zM358 302h1v1h-1zM408 302h1v1h-1zM458 302h1v1h-1zM508 302h1v1h-1zM558 302h1v1h-1zM608 302h1v1h-1zM658 302h1v1h-1zM708 302h1v1h-1zM759 302h1v1h-1zM57 307h1v1h-1zM107 307h1v1h-1zM157 307h1v1h-1zM207 307h1v1h-1zM257 307h1v1h-1zM307 307h1v1h-1zM358 307h1v1h-1zM408 307h1v1h-1zM458 307h1v1h-1zM508 307h1v1h-1zM558 307h1v1h-1zM608 307h1v1h-1zM658 307h1v1h-1zM708 307h1v1h-1zM759 307h1v1h-1zM57 312h1v1h-1zM107 312h1v1h-1zM157 312h1v1h-1zM207 312h1v1h-1zM257 312h1v1h-1zM307 312h1v1h-1zM358 312h1v1h-1zM408 312h1v1h-1zM458 312h1v1h-1zM508 312h1v1h-1zM558 312h1v1h-1zM608 312h1v1h-1zM658 312h1v1h-1zM708 312h1v1h-1zM759 312h1v1h-1zM57 317h1v1h-1zM107 317h1v1h-1zM157 317h1v1h-1zM207 317h1v1h-1zM257 317h1v1h-1zM307 317h1v1h-1zM358 317h1v1h-1zM408 317h1v1h-1zM458 317h1v1h-1zM508 317h1v1h-1zM558 317h1v1h-1zM608 317h1v1h-1zM658 317h1v1h-1zM708 317h1v1h-1zM759 317h1v1h-1zM12 322h1v1h-1zM17 322h1v1h-1zM22 322h1v1h-1zM27 322h1v1h-1zM32 322h1v1h-1zM37 322h1v1h-1zM42 322h1v1h-1zM47 322h1v1h-1zM52 322h1v1h-1zM57 322h1v1h-1zM62 322h1v1h-1zM67 322h1v1h-1zM72 322h1v1h-1zM77 322h1v1h-1zM82 322h1v1h-1zM87 322h1v1h-1zM92 322h1v1h-1zM97 322h1v1h-1zM102 322h1v1h-1zM107 322h1v1h-1zM112 322h1v1h-1zM117 322h1v1h-1zM122 322h1v1h-1zM127 322h1v1h-1zM132 322h1v1h-1zM137 322h1v1h-1zM142 322h1v1h-1zM147 322h1v1h-1zM152 322h1v1h-1zM157 322h1v1h-1zM162 322h1v1h-1zM167 322h1v1h-1zM172 322h1v1h-1zM177 322h1v1h-1zM182 322h1v1h-1zM187 322h1v1h-1zM192 322h1v1h-1zM197 322h1v1h-1zM202 322h1v1h-1zM207 322h1v1h-1zM212 322h1v1h-1zM217 322h1v1h-1zM222 322h1v1h-1zM227 322h1v1h-1zM232 322h1v1h-1zM237 322h1v1h-1zM242 322h1v1h-1zM247 322h1v1h-1zM252 322h1v1h-1zM257 322h1v1h-1zM262 322h1v1h-1zM267 322h1v1h-1zM272 322h1v1h-1zM277 322h1v1h-1zM282 322h1v1h-1zM287 322h1v1h-1zM292 322h1v1h-1zM297 322h1v1h-1zM302 322h1v1h-1zM307 322h1v1h-1zM312 322h1v1h-1zM317 322h1v1h-1zM322 322h1v1h-1zM327 322h1v1h-1zM332 322h1v1h-1zM337 322h1v1h-1zM342 322h1v1h-1zM347 322h1v1h-1zM352 322h1v1h-1zM358 322h1v1h-1zM363 322h1v1h-1zM368 322h1v1h-1zM373 322h1v1h-1zM378 322h1v1h-1zM383 322h1v1h-1zM388 322h1v1h-1zM393 322h1v1h-1zM398 322h1v1h-1zM403 322h1v1h-1zM408 322h1v1h-1zM413 322h1v1h-1zM418 322h1v1h-1zM423 322h1v1h-1zM428 322h1v1h-1zM433 322h1v1h-1zM438 322h1v1h-1zM443 322h1v1h-1zM448 322h1v1h-1zM453 322h1v1h-1zM458 322h1v1h-1zM463 322h1v1h-1zM468 322h1v1h-1zM473 322h1v1h-1zM478 322h1v1h-1zM483 322h1v1h-1zM488 322h1v1h-1zM493 322h1v1h-1zM498 322h1v1h-1zM503 322h1v1h-1zM508 322h1v1h-1zM513 322h1v1h-1zM518 322h1v1h-1zM523 322h1v1h-1zM528 322h1v1h-1zM533 322h1v1h-1zM538 322h1v1h-1zM543 322h1v1h-1zM548 322h1v1h-1zM553 322h1v1h-1zM558 322h1v1h-1zM563 322h1v1h-1zM568 322h1v1h-1zM573 322h1v1h-1zM578 322h1v1h-1zM583 322h1v1h-1zM588 322h1v1h-1zM593 322h1v1h-1zM598 322h1v1h-1zM603 322h1v1h-1zM608 322h1v1h-1zM613 322h1v1h-1zM618 322h1v1h-1zM623 322h1v1h-1zM628 322h1v1h-1zM633 322h1v1h-1zM638 322h1v1h-1zM643 322h1v1h-1zM648 322h1v1h-1zM653 322h1v1h-1zM658 322h1v1h-1zM663 322h1v1h-1zM668 322h1v1h-1zM673 322h1v1h-1zM678 322h1v1h-1zM683 322h1v1h-1zM688 322h1v1h-1zM693 322h1v1h-1zM698 322h1v1h-1zM703 322h1v1h-1zM708 322h1v1h-1zM713 322h1v1h-1zM718 322h1v1h-1zM723 322h1v1h-1zM728 322h1v1h-1zM733 322h1v1h-1zM738 322h1v1h-1zM743 322h1v1h-1zM748 322h1v1h-1zM753 322h1v1h-1zM759 322h1v1h-1zM764 322h1v1h-1zM769 322h1v1h-1zM774 322h1v1h-1zM779 322h1v1h-1zM784 322h1v1h-1zM789 322h1v1h-1zM794 322h1v1h-1zM799 322h1v1h-1zM804 322h1v1h-1zM57 327h1v1h-1zM107 327h1v1h-1zM157 327h1v1h-1zM207 327h1v1h-1zM257 327h1v1h-1zM307 327h1v1h-1zM358 327h1v1h-1zM408 327h1v1h-1zM458 327h1v1h-1zM508 327h1v1h-1zM558 327h1v1h-1zM608 327h1v1h-1zM658 327h1v1h-1zM708 327h1v1h-1zM759 327h1v1h-1zM57 332h1v1h-1zM107 332h1v1h-1zM157 332h1v1h-1zM207 332h1v1h-1zM257 332h1v1h-1zM307 332h1v1h-1zM358 332h1v1h-1zM408 332h1v1h-1zM458 332h1v1h-1zM508 332h1v1h-1zM558 332h1v1h-1zM608 332h1v1h-1zM658 332h1v1h-1zM708 332h1v1h-1zM759 332h1v1h-1zM57 337h1v1h-1zM107 337h1v1h-1zM157 337h1v1h-1zM207 337h1v1h-1zM257 337h1v1h-1zM307 337h1v1h-1zM358 337h1v1h-1zM408 337h1v1h-1zM458 337h1v1h-1zM508 337h1v1h-1zM558 337h1v1h-1zM608 337h1v1h-1zM658 337h1v1h-1zM708 337h1v1h-1zM759 337h1v1h-1zM57 342h1v1h-1zM107 342h1v1h-1zM157 342h1v1h-1zM207 342h1v1h-1zM257 342h1v1h-1zM307 342h1v1h-1zM358 342h1v1h-1zM408 342h1v1h-1zM458 342h1v1h-1zM508 342h1v1h-1zM558 342h1v1h-1zM608 342h1v1h-1zM658 342h1v1h-1zM708 342h1v1h-1zM759 342h1v1h-1zM57 347h1v1h-1zM107 347h1v1h-1zM157 347h1v1h-1zM207 347h1v1h-1zM257 347h1v1h-1zM307 347h1v1h-1zM358 347h1v1h-1zM408 347h1v1h-1zM458 347h1v1h-1zM508 347h1v1h-1zM558 347h1v1h-1zM608 347h1v1h-1zM658 347h1v1h-1zM708 347h1v1h-1zM759 347h1v1h-1zM57 352h1v1h-1zM107 352h1v1h-1zM157 352h1v1h-1zM207 352h1v1h-1zM257 352h1v1h-1zM307 352h1v1h-1zM358 352h1v1h-1zM408 352h1v1h-1zM458 352h1v1h-1zM508 352h1v1h-1zM558 352h1v1h-1zM608 352h1v1h-1zM658 352h1v1h-1zM708 352h1v1h-1zM759 352h1v1h-1zM57 357h1v1h-1zM107 357h1v1h-1zM157 357h1v1h-1zM207 357h1v1h-1zM257 357h1v1h-1zM307 357h1v1h-1zM358 357h1v1h-1zM408 357h1v1h-1zM458 357h1v1h-1zM508 357h1v1h-1zM558 357h1v1h-1zM608 357h1v1h-1zM658 357h1v1h-1zM708 357h1v1h-1zM759 357h1v1h-1zM57 362h1v1h-1zM107 362h1v1h-1zM157 362h1v1h-1zM207 362h1v1h-1zM257 362h1v1h-1zM307 362h1v1h-1zM358 362h1v1h-1zM408 362h1v1h-1zM458 362h1v1h-1zM508 362h1v1h-1zM558 362h1v1h-1zM608 362h1v1h-1zM658 362h1v1h-1zM708 362h1v1h-1zM759 362h1v1h-1zM57 367h1v1h-1zM107 367h1v1h-1zM157 367h1v1h-1zM207 367h1v1h-1zM257 367h1v1h-1zM307 367h1v1h-1zM358 367h1v1h-1zM408 367h1v1h-1zM458 367h1v1h-1zM508 367h1v1h-1zM558 367h1v1h-1zM608 367h1v1h-1zM658 367h1v1h-1zM708 367h1v1h-1zM759 367h1v1h-1zM12 372h1v1h-1zM17 372h1v1h-1zM22 372h1v1h-1zM27 372h1v1h-1zM32 372h1v1h-1zM37 372h1v1h-1zM42 372h1v1h-1zM47 372h1v1h-1zM52 372h1v1h-1zM57 372h1v1h-1zM62 372h1v1h-1zM67 372h1v1h-1zM72 372h1v1h-1zM77 372h1v1h-1zM82 372h1v1h-1zM87 372h1v1h-1zM92 372h1v1h-1zM97 372h1v1h-1zM102 372h1v1h-1zM107 372h1v1h-1zM112 372h1v1h-1zM117 372h1v1h-1zM122 372h1v1h-1zM127 372h1v1h-1zM132 372h1v1h-1zM137 372h1v1h-1zM142 372h1v1h-1zM147 372h1v1h-1zM152 372h1v1h-1zM157 372h1v1h-1zM162 372h1v1h-1zM167 372h1v1h-1zM172 372h1v1h-1zM177 372h1v1h-1zM182 372h1v1h-1zM187 372h1v1h-1zM192 372h1v1h-1zM197 372h1v1h-1zM202 372h1v1h-1zM207 372h1v1h-1zM212 372h1v1h-1zM217 372h1v1h-1zM222 372h1v1h-1zM227 372h1v1h-1zM232 372h1v1h-1zM237 372h1v1h-1zM242 372h1v1h-1zM247 372h1v1h-1zM252 372h1v1h-1zM257 372h1v1h-1zM262 372h1v1h-1zM267 372h1v1h-1zM272 372h1v1h-1zM277 372h1v1h-1zM282 372h1v1h-1zM287 372h1v1h-1zM292 372h1v1h-1zM297 372h1v1h-1zM302 372h1v1h-1zM307 372h1v1h-1zM312 372h1v1h-1zM317 372h1v1h-1zM322 372h1v1h-1zM327 372h1v1h-1zM332 372h1v1h-1zM337 372h1v1h-1zM342 372h1v1h-1zM347 372h1v1h-1zM352 372h1v1h-1zM358 372h1v1h-1zM363 372h1v1h-1zM368 372h1v1h-1zM373 372h1v1h-1zM378 372h1v1h-1zM383 372h1v1h-1zM388 372h1v1h-1zM393 372h1v1h-1zM398 372h1v1h-1zM403 372h1v1h-1zM408 372h1v1h-1zM413 372h1v1h-1zM418 372h1v1h-1zM423 372h1v1h-1zM428 372h1v1h-1zM433 372h1v1h-1zM438 372h1v1h-1zM443 372h1v1h-1zM448 372h1v1h-1zM453 372h1v1h-1zM458 372h1v1h-1zM463 372h1v1h-1zM468 372h1v1h-1zM473 372h1v1h-1zM478 372h1v1h-1zM483 372h1v1h-1zM488 372h1v1h-1zM493 372h1v1h-1zM498 372h1v1h-1zM503 372h1v1h-1zM508 372h1v1h-1zM513 372h1v1h-1zM518 372h1v1h-1zM523 372h1v1h-1zM528 372h1v1h-1zM533 372h1v1h-1zM538 372h1v1h-1zM543 372h1v1h-1zM548 372h1v1h-1zM553 372h1v1h-1zM558 372h1v1h-1zM563 372h1v1h-1zM568 372h1v1h-1zM573 372h1v1h-1zM578 372h1v1h-1zM583 372h1v1h-1zM588 372h1v1h-1zM593 372h1v1h-1zM598 372h1v1h-1zM603 372h1v1h-1zM608 372h1v1h-1zM613 372h1v1h-1zM618 372h1v1h-1zM623 372h1v1h-1zM628 372h1v1h-1zM633 372h1v1h-1zM638 372h1v1h-1zM643 372h1v1h-1zM648 372h1v1h-1zM653 372h1v1h-1zM658 372h1v1h-1zM663 372h1v1h-1zM668 372h1v1h-1zM673 372h1v1h-1zM678 372h1v1h-1zM683 372h1v1h-1zM688 372h1v1h-1zM693 372h1v1h-1zM698 372h1v1h-1zM703 372h1v1h-1zM708 372h1v1h-1zM713 372h1v1h-1zM718 372h1v1h-1zM723 372h1v1h-1zM728 372h1v1h-1zM733 372h1v1h-1zM738 372h1v1h-1zM743 372h1v1h-1zM748 372h1v1h-1zM753 372h1v1h-1zM759 372h1v1h-1zM764 372h1v1h-1zM769 372h1v1h-1zM774 372h1v1h-1zM779 372h1v1h-1zM784 372h1v1h-1zM789 372h1v1h-1zM794 372h1v1h-1zM799 372h1v1h-1zM804 372h1v1h-1zM57 377h1v1h-1zM107 377h1v1h-1zM157 377h1v1h-1zM207 377h1v1h-1zM257 377h1v1h-1zM307 377h1v1h-1zM358 377h1v1h-1zM408 377h1v1h-1zM458 377h1v1h-1zM508 377h1v1h-1zM558 377h1v1h-1zM608 377h1v1h-1zM658 377h1v1h-1zM708 377h1v1h-1zM759 377h1v1h-1zM57 382h1v1h-1zM107 382h1v1h-1zM157 382h1v1h-1zM207 382h1v1h-1zM257 382h1v1h-1zM307 382h1v1h-1zM358 382h1v1h-1zM408 382h1v1h-1zM458 382h1v1h-1zM508 382h1v1h-1zM558 382h1v1h-1zM608 382h1v1h-1zM658 382h1v1h-1zM708 382h1v1h-1zM759 382h1v1h-1zM57 387h1v1h-1zM107 387h1v1h-1zM157 387h1v1h-1zM207 387h1v1h-1zM257 387h1v1h-1zM307 387h1v1h-1zM358 387h1v1h-1zM408 387h1v1h-1zM458 387h1v1h-1zM508 387h1v1h-1zM558 387h1v1h-1zM608 387h1v1h-1zM658 387h1v1h-1zM708 387h1v1h-1zM759 387h1v1h-1zM57 392h1v1h-1zM107 392h1v1h-1zM157 392h1v1h-1zM207 392h1v1h-1zM257 392h1v1h-1zM307 392h1v1h-1zM358 392h1v1h-1zM408 392h1v1h-1zM458 392h1v1h-1zM508 392h1v1h-1zM558 392h1v1h-1zM608 392h1v1h-1zM658 392h1v1h-1zM708 392h1v1h-1zM759 392h1v1h-1zM57 397h1v1h-1zM107 397h1v1h-1zM157 397h1v1h-1zM207 397h1v1h-1zM257 397h1v1h-1zM307 397h1v1h-1zM358 397h1v1h-1zM408 397h1v1h-1zM458 397h1v1h-1zM508 397h1v1h-1zM558 397h1v1h-1zM608 397h1v1h-1zM658 397h1v1h-1zM708 397h1v1h-1zM759 397h1v1h-1zM57 402h1v1h-1zM107 402h1v1h-1zM157 402h1v1h-1zM207 402h1v1h-1zM257 402h1v1h-1zM307 402h1v1h-1zM358 402h1v1h-1zM408 402h1v1h-1zM458 402h1v1h-1zM508 402h1v1h-1zM558 402h1v1h-1zM608 402h1v1h-1zM658 402h1v1h-1zM708 402h1v1h-1zM759 402h1v1h-1zM57 407h1v1h-1zM107 407h1v1h-1zM157 407h1v1h-1zM207 407h1v1h-1zM257 407h1v1h-1zM307 407h1v1h-1zM358 407h1v1h-1zM408 407h1v1h-1zM458 407h1v1h-1zM508 407h1v1h-1zM558 407h1v1h-1zM608 407h1v1h-1zM658 407h1v1h-1zM708 407h1v1h-1zM759 407h1v1h-1zM57 412h1v1h-1zM107 412h1v1h-1zM157 412h1v1h-1zM207 412h1v1h-1zM257 412h1v1h-1zM307 412h1v1h-1zM358 412h1v1h-1zM408 412h1v1h-1zM458 412h1v1h-1zM508 412h1v1h-1zM558 412h1v1h-1zM608 412h1v1h-1zM658 412h1v1h-1zM708 412h1v1h-1zM759 412h1v1h-1zM57 417h1v1h-1zM107 417h1v1h-1zM157 417h1v1h-1zM207 417h1v1h-1zM257 417h1v1h-1zM307 417h1v1h-1zM358 417h1v1h-1zM408 417h1v1h-1zM458 417h1v1h-1zM508 417h1v1h-1zM558 417h1v1h-1zM608 417h1v1h-1zM658 417h1v1h-1zM708 417h1v1h-1zM759 417h1v1h-1zM12 422h1v1h-1zM17 422h1v1h-1zM22 422h1v1h-1zM27 422h1v1h-1zM32 422h1v1h-1zM37 422h1v1h-1zM42 422h1v1h-1zM47 422h1v1h-1zM52 422h1v1h-1zM57 422h1v1h-1zM62 422h1v1h-1zM67 422h1v1h-1zM72 422h1v1h-1zM77 422h1v1h-1zM82 422h1v1h-1zM87 422h1v1h-1zM92 422h1v1h-1zM97 422h1v1h-1zM102 422h1v1h-1zM107 422h1v1h-1zM112 422h1v1h-1zM117 422h1v1h-1zM122 422h1v1h-1zM127 422h1v1h-1zM132 422h1v1h-1zM137 422h1v1h-1zM142 422h1v1h-1zM147 422h1v1h-1zM152 422h1v1h-1zM157 422h1v1h-1zM162 422h1v1h-1zM167 422h1v1h-1zM172 422h1v1h-1zM177 422h1v1h-1zM182 422h1v1h-1zM187 422h1v1h-1zM192 422h1v1h-1zM197 422h1v1h-1zM202 422h1v1h-1zM207 422h1v1h-1zM212 422h1v1h-1zM217 422h1v1h-1zM222 422h1v1h-1zM227 422h1v1h-1zM232 422h1v1h-1zM237 422h1v1h-1zM242 422h1v1h-1zM247 422h1v1h-1zM252 422h1v1h-1zM257 422h1v1h-1zM262 422h1v1h-1zM267 422h1v1h-1zM272 422h1v1h-1zM277 422h1v1h-1zM282 422h1v1h-1zM287 422h1v1h-1zM292 422h1v1h-1zM297 422h1v1h-1zM302 422h1v1h-1zM307 422h1v1h-1zM312 422h1v1h-1zM317 422h1v1h-1zM322 422h1v1h-1zM327 422h1v1h-1zM332 422h1v1h-1zM337 422h1v1h-1zM342 422h1v1h-1zM347 422h1v1h-1zM352 422h1v1h-1zM358 422h1v1h-1zM363 422h1v1h-1zM368 422h1v1h-1zM373 422h1v1h-1zM378 422h1v1h-1zM383 422h1v1h-1zM388 422h1v1h-1zM393 422h1v1h-1zM398 422h1v1h-1zM403 422h1v1h-1zM408 422h1v1h-1zM413 422h1v1h-1zM418 422h1v1h-1zM423 422h1v1h-1zM428 422h1v1h-1zM433 422h1v1h-1zM438 422h1v1h-1zM443 422h1v1h-1zM448 422h1v1h-1zM453 422h1v1h-1zM458 422h1v1h-1zM463 422h1v1h-1zM468 422h1v1h-1zM473 422h1v1h-1zM478 422h1v1h-1zM483 422h1v1h-1zM488 422h1v1h-1zM493 422h1v1h-1zM498 422h1v1h-1zM503 422h1v1h-1zM508 422h1v1h-1zM513 422h1v1h-1zM518 422h1v1h-1zM523 422h1v1h-1zM528 422h1v1h-1zM533 422h1v1h-1zM538 422h1v1h-1zM543 422h1v1h-1zM548 422h1v1h-1zM553 422h1v1h-1zM558 422h1v1h-1zM563 422h1v1h-1zM568 422h1v1h-1zM573 422h1v1h-1zM578 422h1v1h-1zM583 422h1v1h-1zM588 422h1v1h-1zM593 422h1v1h-1zM598 422h1v1h-1zM603 422h1v1h-1zM608 422h1v1h-1zM613 422h1v1h-1zM618 422h1v1h-1zM623 422h1v1h-1zM628 422h1v1h-1zM633 422h1v1h-1zM638 422h1v1h-1zM643 422h1v1h-1zM648 422h1v1h-1zM653 422h1v1h-1zM658 422h1v1h-1zM663 422h1v1h-1zM668 422h1v1h-1zM673 422h1v1h-1zM678 422h1v1h-1zM683 422h1v1h-1zM688 422h1v1h-1zM693 422h1v1h-1zM698 422h1v1h-1zM703 422h1v1h-1zM708 422h1v1h-1zM713 422h1v1h-1zM718 422h1v1h-1zM723 422h1v1h-1zM728 422h1v1h-1zM733 422h1v1h-1zM738 422h1v1h-1zM743 422h1v1h-1zM748 422h1v1h-1zM753 422h1v1h-1zM759 422h1v1h-1zM764 422h1v1h-1zM769 422h1v1h-1zM774 422h1v1h-1zM779 422h1v1h-1zM784 422h1v1h-1zM789 422h1v1h-1zM794 422h1v1h-1zM799 422h1v1h-1zM804 422h1v1h-1zM57 427h1v1h-1zM107 427h1v1h-1zM157 427h1v1h-1zM207 427h1v1h-1zM257 427h1v1h-1zM307 427h1v1h-1zM358 427h1v1h-1zM408 427h1v1h-1zM458 427h1v1h-1zM508 427h1v1h-1zM558 427h1v1h-1zM608 427h1v1h-1zM658 427h1v1h-1zM708 427h1v1h-1zM759 427h1v1h-1zM57 432h1v1h-1zM107 432h1v1h-1zM157 432h1v1h-1zM207 432h1v1h-1zM257 432h1v1h-1zM307 432h1v1h-1zM358 432h1v1h-1zM408 432h1v1h-1zM458 432h1v1h-1zM508 432h1v1h-1zM558 432h1v1h-1zM608 432h1v1h-1zM658 432h1v1h-1zM708 432h1v1h-1zM759 432h1v1h-1zM57 437h1v1h-1zM107 437h1v1h-1zM157 437h1v1h-1zM207 437h1v1h-1zM257 437h1v1h-1zM307 437h1v1h-1zM358 437h1v1h-1zM408 437h1v1h-1zM458 437h1v1h-1zM508 437h1v1h-1zM558 437h1v1h-1zM608 437h1v1h-1zM658 437h1v1h-1zM708 437h1v1h-1zM759 437h1v1h-1zM57 442h1v1h-1zM107 442h1v1h-1zM157 442h1v1h-1zM207 442h1v1h-1zM257 442h1v1h-1zM307 442h1v1h-1zM358 442h1v1h-1zM408 442h1v1h-1zM458 442h1v1h-1zM508 442h1v1h-1zM558 442h1v1h-1zM608 442h1v1h-1zM658 442h1v1h-1zM708 442h1v1h-1zM759 442h1v1h-1zM57 447h1v1h-1zM107 447h1v1h-1zM157 447h1v1h-1zM207 447h1v1h-1zM257 447h1v1h-1zM307 447h1v1h-1zM358 447h1v1h-1zM408 447h1v1h-1zM458 447h1v1h-1zM508 447h1v1h-1zM558 447h1v1h-1zM608 447h1v1h-1zM658 447h1v1h-1zM708 447h1v1h-1zM759 447h1v1h-1zM57 452h1v1h-1zM107 452h1v1h-1zM157 452h1v1h-1zM207 452h1v1h-1zM257 452h1v1h-1zM307 452h1v1h-1zM358 452h1v1h-1zM408 452h1v1h-1zM458 452h1v1h-1zM508 452h1v1h-1zM558 452h1v1h-1zM608 452h1v1h-1zM658 452h1v1h-1zM708 452h1v1h-1zM759 452h1v1h-1zM57 457h1v1h-1zM107 457h1v1h-1zM157 457h1v1h-1zM207 457h1v1h-1zM257 457h1v1h-1zM307 457h1v1h-1zM358 457h1v1h-1zM408 457h1v1h-1zM458 457h1v1h-1zM508 457h1v1h-1zM558 457h1v1h-1zM608 457h1v1h-1zM658 457h1v1h-1zM708 457h1v1h-1zM759 457h1v1h-1zM57 462h1v1h-1zM107 462h1v1h-1zM157 462h1v1h-1zM207 462h1v1h-1zM257 462h1v1h-1zM307 462h1v1h-1zM358 462h1v1h-1zM408 462h1v1h-1zM458 462h1v1h-1zM508 462h1v1h-1zM558 462h1v1h-1zM608 462h1v1h-1zM658 462h1v1h-1zM708 462h1v1h-1zM759 462h1v1h-1zM57 467h1v1h-1zM107 467h1v1h-1zM157 467h1v1h-1zM207 467h1v1h-1zM257 467h1v1h-1zM307 467h1v1h-1zM358 467h1v1h-1zM408 467h1v1h-1zM458 467h1v1h-1zM508 467h1v1h-1zM558 467h1v1h-1zM608 467h1v1h-1zM658 467h1v1h-1zM708 467h1v1h-1zM759 467h1v1h-1zM12 472h1v1h-1zM17 472h1v1h-1zM22 472h1v1h-1zM27 472h1v1h-1zM32 472h1v1h-1zM37 472h1v1h-1zM42 472h1v1h-1zM47 472h1v1h-1zM52 472h1v1h-1zM57 472h1v1h-1zM62 472h1v1h-1zM67 472h1v1h-1zM72 472h1v1h-1zM77 472h1v1h-1zM82 472h1v1h-1zM87 472h1v1h-1zM92 472h1v1h-1zM97 472h1v1h-1zM102 472h1v1h-1zM107 472h1v1h-1zM112 472h1v1h-1zM117 472h1v1h-1zM122 472h1v1h-1zM127 472h1v1h-1zM132 472h1v1h-1zM137 472h1v1h-1zM142 472h1v1h-1zM147 472h1v1h-1zM152 472h1v1h-1zM157 472h1v1h-1zM162 472h1v1h-1zM167 472h1v1h-1zM172 472h1v1h-1zM177 472h1v1h-1zM182 472h1v1h-1zM187 472h1v1h-1zM192 472h1v1h-1zM197 472h1v1h-1zM202 472h1v1h-1zM207 472h1v1h-1zM212 472h1v1h-1zM217 472h1v1h-1zM222 472h1v1h-1zM227 472h1v1h-1zM232 472h1v1h-1zM237 472h1v1h-1zM242 472h1v1h-1zM247 472h1v1h-1zM252 472h1v1h-1zM257 472h1v1h-1zM262 472h1v1h-1zM267 472h1v1h-1zM272 472h1v1h-1zM277 472h1v1h-1zM282 472h1v1h-1zM287 472h1v1h-1zM292 472h1v1h-1zM297 472h1v1h-1zM302 472h1v1h-1zM307 472h1v1h-1zM312 472h1v1h-1zM317 472h1v1h-1zM322 472h1v1h-1zM327 472h1v1h-1zM332 472h1v1h-1zM337 472h1v1h-1zM342 472h1v1h-1zM347 472h1v1h-1zM352 472h1v1h-1zM358 472h1v1h-1zM363 472h1v1h-1zM368 472h1v1h-1zM373 472h1v1h-1zM378 472h1v1h-1zM383 472h1v1h-1zM388 472h1v1h-1zM393 472h1v1h-1zM398 472h1v1h-1zM403 472h1v1h-1zM408 472h1v1h-1zM413 472h1v1h-1zM418 472h1v1h-1zM423 472h1v1h-1zM428 472h1v1h-1zM433 472h1v1h-1zM438 472h1v1h-1zM443 472h1v1h-1zM448 472h1v1h-1zM453 472h1v1h-1zM458 472h1v1h-1zM463 472h1v1h-1zM468 472h1v1h-1zM473 472h1v1h-1zM478 472h1v1h-1zM483 472h1v1h-1zM488 472h1v1h-1zM493 472h1v1h-1zM498 472h1v1h-1zM503 472h1v1h-1zM508 472h1v1h-1zM513 472h1v1h-1zM518 472h1v1h-1zM523 472h1v1h-1zM528 472h1v1h-1zM533 472h1v1h-1zM538 472h1v1h-1zM543 472h1v1h-1zM548 472h1v1h-1zM553 472h1v1h-1zM558 472h1v1h-1zM563 472h1v1h-1zM568 472h1v1h-1zM573 472h1v1h-1zM578 472h1v1h-1zM583 472h1v1h-1zM588 472h1v1h-1zM593 472h1v1h-1zM598 472h1v1h-1zM603 472h1v1h-1zM608 472h1v1h-1zM613 472h1v1h-1zM618 472h1v1h-1zM623 472h1v1h-1zM628 472h1v1h-1zM633 472h1v1h-1zM638 472h1v1h-1zM643 472h1v1h-1zM648 472h1v1h-1zM653 472h1v1h-1zM658 472h1v1h-1zM663 472h1v1h-1zM668 472h1v1h-1zM673 472h1v1h-1zM678 472h1v1h-1zM683 472h1v1h-1zM688 472h1v1h-1zM693 472h1v1h-1zM698 472h1v1h-1zM703 472h1v1h-1zM708 472h1v1h-1zM713 472h1v1h-1zM718 472h1v1h-1zM723 472h1v1h-1zM728 472h1v1h-1zM733 472h1v1h-1zM738 472h1v1h-1zM743 472h1v1h-1zM748 472h1v1h-1zM753 472h1v1h-1zM759 472h1v1h-1zM764 472h1v1h-1zM769 472h1v1h-1zM774 472h1v1h-1zM779 472h1v1h-1zM784 472h1v1h-1zM789 472h1v1h-1zM794 472h1v1h-1zM799 472h1v1h-1zM804 472h1v1h-1zM57 477h1v1h-1zM107 477h1v1h-1zM157 477h1v1h-1zM207 477h1v1h-1zM257 477h1v1h-1zM307 477h1v1h-1zM358 477h1v1h-1zM408 477h1v1h-1zM458 477h1v1h-1zM508 477h1v1h-1zM558 477h1v1h-1zM608 477h1v1h-1zM658 477h1v1h-1zM708 477h1v1h-1zM759 477h1v1h-1zM57 482h1v1h-1zM107 482h1v1h-1zM157 482h1v1h-1zM207 482h1v1h-1zM257 482h1v1h-1zM307 482h1v1h-1zM358 482h1v1h-1zM408 482h1v1h-1zM458 482h1v1h-1zM508 482h1v1h-1zM558 482h1v1h-1zM608 482h1v1h-1zM658 482h1v1h-1zM708 482h1v1h-1zM759 482h1v1h-1zM57 487h1v1h-1zM107 487h1v1h-1zM157 487h1v1h-1zM207 487h1v1h-1zM257 487h1v1h-1zM307 487h1v1h-1zM358 487h1v1h-1zM408 487h1v1h-1zM458 487h1v1h-1zM508 487h1v1h-1zM558 487h1v1h-1zM608 487h1v1h-1zM658 487h1v1h-1zM708 487h1v1h-1zM759 487h1v1h-1zM57 492h1v1h-1zM107 492h1v1h-1zM157 492h1v1h-1zM207 492h1v1h-1zM257 492h1v1h-1zM307 492h1v1h-1zM358 492h1v1h-1zM408 492h1v1h-1zM458 492h1v1h-1zM508 492h1v1h-1zM558 492h1v1h-1zM608 492h1v1h-1zM658 492h1v1h-1zM708 492h1v1h-1zM759 492h1v1h-1zM57 497h1v1h-1zM107 497h1v1h-1zM157 497h1v1h-1zM207 497h1v1h-1zM257 497h1v1h-1zM307 497h1v1h-1zM358 497h1v1h-1zM408 497h1v1h-1zM458 497h1v1h-1zM508 497h1v1h-1zM558 497h1v1h-1zM608 497h1v1h-1zM658 497h1v1h-1zM708 497h1v1h-1zM759 497h1v1h-1zM57 502h1v1h-1zM107 502h1v1h-1zM157 502h1v1h-1zM207 502h1v1h-1zM257 502h1v1h-1zM307 502h1v1h-1zM358 502h1v1h-1zM408 502h1v1h-1zM458 502h1v1h-1zM508 502h1v1h-1zM558 502h1v1h-1zM608 502h1v1h-1zM658 502h1v1h-1zM708 502h1v1h-1zM759 502h1v1h-1zM57 507h1v1h-1zM107 507h1v1h-1zM157 507h1v1h-1zM207 507h1v1h-1zM257 507h1v1h-1zM307 507h1v1h-1zM358 507h1v1h-1zM408 507h1v1h-1zM458 507h1v1h-1zM508 507h1v1h-1zM558 507h1v1h-1zM608 507h1v1h-1zM658 507h1v1h-1zM708 507h1v1h-1zM759 507h1v1h-1zM57 512h1v1h-1zM107 512h1v1h-1zM157 512h1v1h-1zM207 512h1v1h-1zM257 512h1v1h-1zM307 512h1v1h-1zM358 512h1v1h-1zM408 512h1v1h-1zM458 512h1v1h-1zM508 512h1v1h-1zM558 512h1v1h-1zM608 512h1v1h-1zM658 512h1v1h-1zM708 512h1v1h-1zM759 512h1v1h-1zM57 517h1v1h-1zM107 517h1v1h-1zM157 517h1v1h-1zM207 517h1v1h-1zM257 517h1v1h-1zM307 517h1v1h-1zM358 517h1v1h-1zM408 517h1v1h-1zM458 517h1v1h-1zM508 517h1v1h-1zM558 517h1v1h-1zM608 517h1v1h-1zM658 517h1v1h-1zM708 517h1v1h-1zM759 517h1v1h-1zM12 522h1v1h-1zM17 522h1v1h-1zM22 522h1v1h-1zM27 522h1v1h-1zM32 522h1v1h-1zM37 522h1v1h-1zM42 522h1v1h-1zM47 522h1v1h-1zM52 522h1v1h-1zM57 522h1v1h-1zM62 522h1v1h-1zM67 522h1v1h-1zM72 522h1v1h-1zM77 522h1v1h-1zM82 522h1v1h-1zM87 522h1v1h-1zM92 522h1v1h-1zM97 522h1v1h-1zM102 522h1v1h-1zM107 522h1v1h-1zM112 522h1v1h-1zM117 522h1v1h-1zM122 522h1v1h-1zM127 522h1v1h-1zM132 522h1v1h-1zM137 522h1v1h-1zM142 522h1v1h-1zM147 522h1v1h-1zM152 522h1v1h-1zM157 522h1v1h-1zM162 522h1v1h-1zM167 522h1v1h-1zM172 522h1v1h-1zM177 522h1v1h-1zM182 522h1v1h-1zM187 522h1v1h-1zM192 522h1v1h-1zM197 522h1v1h-1zM202 522h1v1h-1zM207 522h1v1h-1zM212 522h1v1h-1zM217 522h1v1h-1zM222 522h1v1h-1zM227 522h1v1h-1zM232 522h1v1h-1zM237 522h1v1h-1zM242 522h1v1h-1zM247 522h1v1h-1zM252 522h1v1h-1zM257 522h1v1h-1zM262 522h1v1h-1zM267 522h1v1h-1zM272 522h1v1h-1zM277 522h1v1h-1zM282 522h1v1h-1zM287 522h1v1h-1zM292 522h1v1h-1zM297 522h1v1h-1zM302 522h1v1h-1zM307 522h1v1h-1zM312 522h1v1h-1zM317 522h1v1h-1zM322 522h1v1h-1zM327 522h1v1h-1zM332 522h1v1h-1zM337 522h1v1h-1zM342 522h1v1h-1zM347 522h1v1h-1zM352 522h1v1h-1zM358 522h1v1h-1zM363 522h1v1h-1zM368 522h1v1h-1zM373 522h1v1h-1zM378 522h1v1h-1zM383 522h1v1h-1zM388 522h1v1h-1zM393 522h1v1h-1zM398 522h1v1h-1zM403 522h1v1h-1zM408 522h1v1h-1zM413 522h1v1h-1zM418 522h1v1h-1zM423 522h1v1h-1zM428 522h1v1h-1zM433 522h1v1h-1zM438 522h1v1h-1zM443 522h1v1h-1zM448 522h1v1h-1zM453 522h1v1h-1zM458 522h1v1h-1zM463 522h1v1h-1zM468 522h1v1h-1zM473 522h1v1h-1zM478 522h1v1h-1zM483 522h1v1h-1zM488 522h1v1h-1zM493 522h1v1h-1zM498 522h1v1h-1zM503 522h1v1h-1zM508 522h1v1h-1zM513 522h1v1h-1zM518 522h1v1h-1zM523 522h1v1h-1zM528 522h1v1h-1zM533 522h1v1h-1zM538 522h1v1h-1zM543 522h1v1h-1zM548 522h1v1h-1zM553 522h1v1h-1zM558 522h1v1h-1zM563 522h1v1h-1zM568 522h1v1h-1zM573 522h1v1h-1zM578 522h1v1h-1zM583 522h1v1h-1zM588 522h1v1h-1zM593 522h1v1h-1zM598 522h1v1h-1zM603 522h1v1h-1zM608 522h1v1h-1zM613 522h1v1h-1zM618 522h1v1h-1zM623 522h1v1h-1zM628 522h1v1h-1zM633 522h1v1h-1zM638 522h1v1h-1zM643 522h1v1h-1zM648 522h1v1h-1zM653 522h1v1h-1zM658 522h1v1h-1zM663 522h1v1h-1zM668 522h1v1h-1zM673 522h1v1h-1zM678 522h1v1h-1zM683 522h1v1h-1zM688 522h1v1h-1zM693 522h1v1h-1zM698 522h1v1h-1zM703 522h1v1h-1zM708 522h1v1h-1zM713 522h1v1h-1zM718 522h1v1h-1zM723 522h1v1h-1zM728 522h1v1h-1zM733 522h1v1h-1zM738 522h1v1h-1zM743 522h1v1h-1zM748 522h1v1h-1zM753 522h1v1h-1zM759 522h1v1h-1zM764 522h1v1h-1zM769 522h1v1h-1zM774 522h1v1h-1zM779 522h1v1h-1zM784 522h1v1h-1zM789 522h1v1h-1zM794 522h1v1h-1zM799 522h1v1h-1zM804 522h1v1h-1zM57 527h1v1h-1zM107 527h1v1h-1zM157 527h1v1h-1zM207 527h1v1h-1zM257 527h1v1h-1zM307 527h1v1h-1zM358 527h1v1h-1zM408 527h1v1h-1zM458 527h1v1h-1zM508 527h1v1h-1zM558 527h1v1h-1zM608 527h1v1h-1zM658 527h1v1h-1zM708 527h1v1h-1zM759 527h1v1h-1zM57 532h1v1h-1zM107 532h1v1h-1zM157 532h1v1h-1zM207 532h1v1h-1zM257 532h1v1h-1zM307 532h1v1h-1zM358 532h1v1h-1zM408 532h1v1h-1zM458 532h1v1h-1zM508 532h1v1h-1zM558 532h1v1h-1zM608 532h1v1h-1zM658 532h1v1h-1zM708 532h1v1h-1zM759 532h1v1h-1zM57 537h1v1h-1zM107 537h1v1h-1zM157 537h1v1h-1zM207 537h1v1h-1zM257 537h1v1h-1zM307 537h1v1h-1zM358 537h1v1h-1zM408 537h1v1h-1zM458 537h1v1h-1zM508 537h1v1h-1zM558 537h1v1h-1zM608 537h1v1h-1zM658 537h1v1h-1zM708 537h1v1h-1zM759 537h1v1h-1zM57 542h1v1h-1zM107 542h1v1h-1zM157 542h1v1h-1zM207 542h1v1h-1zM257 542h1v1h-1zM307 542h1v1h-1zM358 542h1v1h-1zM408 542h1v1h-1zM458 542h1v1h-1zM508 542h1v1h-1zM558 542h1v1h-1zM608 542h1v1h-1zM658 542h1v1h-1zM708 542h1v1h-1zM759 542h1v1h-1zM57 547h1v1h-1zM107 547h1v1h-1zM157 547h1v1h-1zM207 547h1v1h-1zM257 547h1v1h-1zM307 547h1v1h-1zM358 547h1v1h-1zM408 547h1v1h-1zM458 547h1v1h-1zM508 547h1v1h-1zM558 547h1v1h-1zM608 547h1v1h-1zM658 547h1v1h-1zM708 547h1v1h-1zM759 547h1v1h-1zM57 552h1v1h-1zM107 552h1v1h-1zM157 552h1v1h-1zM207 552h1v1h-1zM257 552h1v1h-1zM307 552h1v1h-1zM358 552h1v1h-1zM408 552h1v1h-1zM458 552h1v1h-1zM508 552h1v1h-1zM558 552h1v1h-1zM608 552h1v1h-1zM658 552h1v1h-1zM708 552h1v1h-1zM759 552h1v1h-1zM57 557h1v1h-1zM107 557h1v1h-1zM157 557h1v1h-1zM207 557h1v1h-1zM257 557h1v1h-1zM307 557h1v1h-1zM358 557h1v1h-1zM408 557h1v1h-1zM458 557h1v1h-1zM508 557h1v1h-1zM558 557h1v1h-1zM608 557h1v1h-1zM658 557h1v1h-1zM708 557h1v1h-1zM759 557h1v1h-1zM57 562h1v1h-1zM107 562h1v1h-1zM157 562h1v1h-1zM207 562h1v1h-1zM257 562h1v1h-1zM307 562h1v1h-1zM358 562h1v1h-1zM408 562h1v1h-1zM458 562h1v1h-1zM508 562h1v1h-1zM558 562h1v1h-1zM608 562h1v1h-1zM658 562h1v1h-1zM708 562h1v1h-1zM759 562h1v1h-1zM57 567h1v1h-1zM107 567h1v1h-1zM157 567h1v1h-1zM207 567h1v1h-1zM257 567h1v1h-1zM307 567h1v1h-1zM358 567h1v1h-1zM408 567h1v1h-1zM458 567h1v1h-1zM508 567h1v1h-1zM558 567h1v1h-1zM608 567h1v1h-1zM658 567h1v1h-1zM708 567h1v1h-1zM759 567h1v1h-1zM12 573h1v1h-1zM17 573h1v1h-1zM22 573h1v1h-1zM27 573h1v1h-1zM32 573h1v1h-1zM37 573h1v1h-1zM42 573h1v1h-1zM47 573h1v1h-1zM52 573h1v1h-1zM57 573h1v1h-1zM62 573h1v1h-1zM67 573h1v1h-1zM72 573h1v1h-1zM77 573h1v1h-1zM82 573h1v1h-1zM87 573h1v1h-1zM92 573h1v1h-1zM97 573h1v1h-1zM102 573h1v1h-1zM107 573h1v1h-1zM112 573h1v1h-1zM117 573h1v1h-1zM122 573h1v1h-1zM127 573h1v1h-1zM132 573h1v1h-1zM137 573h1v1h-1zM142 573h1v1h-1zM147 573h1v1h-1zM152 573h1v1h-1zM157 573h1v1h-1zM162 573h1v1h-1zM167 573h1v1h-1zM172 573h1v1h-1zM177 573h1v1h-1zM182 573h1v1h-1zM187 573h1v1h-1zM192 573h1v1h-1zM197 573h1v1h-1zM202 573h1v1h-1zM207 573h1v1h-1zM212 573h1v1h-1zM217 573h1v1h-1zM222 573h1v1h-1zM227 573h1v1h-1zM232 573h1v1h-1zM237 573h1v1h-1zM242 573h1v1h-1zM247 573h1v1h-1zM252 573h1v1h-1zM257 573h1v1h-1zM262 573h1v1h-1zM267 573h1v1h-1zM272 573h1v1h-1zM277 573h1v1h-1zM282 573h1v1h-1zM287 573h1v1h-1zM292 573h1v1h-1zM297 573h1v1h-1zM302 573h1v1h-1zM307 573h1v1h-1zM312 573h1v1h-1zM317 573h1v1h-1zM322 573h1v1h-1zM327 573h1v1h-1zM332 573h1v1h-1zM337 573h1v1h-1zM342 573h1v1h-1zM347 573h1v1h-1zM352 573h1v1h-1zM358 573h1v1h-1zM363 573h1v1h-1zM368 573h1v1h-1zM373 573h1v1h-1zM378 573h1v1h-1zM383 573h1v1h-1zM388 573h1v1h-1zM393 573h1v1h-1zM398 573h1v1h-1zM403 573h1v1h-1zM408 573h1v1h-1zM413 573h1v1h-1zM418 573h1v1h-1zM423 573h1v1h-1zM428 573h1v1h-1zM433 573h1v1h-1zM438 573h1v1h-1zM443 573h1v1h-1zM448 573h1v1h-1zM453 573h1v1h-1zM458 573h1v1h-1zM463 573h1v1h-1zM468 573h1v1h-1zM473 573h1v1h-1zM478 573h1v1h-1zM483 573h1v1h-1zM488 573h1v1h-1zM493 573h1v1h-1zM498 573h1v1h-1zM503 573h1v1h-1zM508 573h1v1h-1zM513 573h1v1h-1zM518 573h1v1h-1zM523 573h1v1h-1zM528 573h1v1h-1zM533 573h1v1h-1zM538 573h1v1h-1zM543 573h1v1h-1zM548 573h1v1h-1zM553 573h1v1h-1zM558 573h1v1h-1zM563 573h1v1h-1zM568 573h1v1h-1zM573 573h1v1h-1zM578 573h1v1h-1zM583 573h1v1h-1zM588 573h1v1h-1zM593 573h1v1h-1zM598 573h1v1h-1zM603 573h1v1h-1zM608 573h1v1h-1zM613 573h1v1h-1zM618 573h1v1h-1zM623 573h1v1h-1zM628 573h1v1h-1zM633 573h1v1h-1zM638 573h1v1h-1zM643 573h1v1h-1zM648 573h1v1h-1zM653 573h1v1h-1zM658 573h1v1h-1zM663 573h1v1h-1zM668 573h1v1h-1zM673 573h1v1h-1zM678 573h1v1h-1zM683 573h1v1h-1zM688 573h1v1h-1zM693 573h1v1h-1zM698 573h1v1h-1zM703 573h1v1h-1zM708 573h1v1h-1zM713 573h1v1h-1zM718 573h1v1h-1zM723 573h1v1h-1zM728 573h1v1h-1zM733 573h1v1h-1zM738 573h1v1h-1zM743 573h1v1h-1zM748 573h1v1h-1zM753 573h1v1h-1zM759 573h1v1h-1zM764 573h1v1h-1zM769 573h1v1h-1zM774 573h1v1h-1zM779 573h1v1h-1zM784 573h1v1h-1zM789 573h1v1h-1zM794 573h1v1h-1zM799 573h1v1h-1zM804 573h1v1h-1zM57 578h1v1h-1zM107 578h1v1h-1zM157 578h1v1h-1zM207 578h1v1h-1zM257 578h1v1h-1zM307 578h1v1h-1zM358 578h1v1h-1zM408 578h1v1h-1zM458 578h1v1h-1zM508 578h1v1h-1zM558 578h1v1h-1zM608 578h1v1h-1zM658 578h1v1h-1zM708 578h1v1h-1zM759 578h1v1h-1zM57 583h1v1h-1zM107 583h1v1h-1zM157 583h1v1h-1zM207 583h1v1h-1zM257 583h1v1h-1zM307 583h1v1h-1zM358 583h1v1h-1zM408 583h1v1h-1zM458 583h1v1h-1zM508 583h1v1h-1zM558 583h1v1h-1zM608 583h1v1h-1zM658 583h1v1h-1zM708 583h1v1h-1zM759 583h1v1h-1zM57 588h1v1h-1zM107 588h1v1h-1zM157 588h1v1h-1zM207 588h1v1h-1zM257 588h1v1h-1zM307 588h1v1h-1zM358 588h1v1h-1zM408 588h1v1h-1zM458 588h1v1h-1zM508 588h1v1h-1zM558 588h1v1h-1zM608 588h1v1h-1zM658 588h1v1h-1zM708 588h1v1h-1zM759 588h1v1h-1zM57 593h1v1h-1zM107 593h1v1h-1zM157 593h1v1h-1zM207 593h1v1h-1zM257 593h1v1h-1zM307 593h1v1h-1zM358 593h1v1h-1zM408 593h1v1h-1zM458 593h1v1h-1zM508 593h1v1h-1zM558 593h1v1h-1zM608 593h1v1h-1zM658 593h1v1h-1zM708 593h1v1h-1zM759 593h1v1h-1zM57 598h1v1h-1zM107 598h1v1h-1zM157 598h1v1h-1zM207 598h1v1h-1zM257 598h1v1h-1zM307 598h1v1h-1zM358 598h1v1h-1zM408 598h1v1h-1zM458 598h1v1h-1zM508 598h1v1h-1zM558 598h1v1h-1zM608 598h1v1h-1zM658 598h1v1h-1zM708 598h1v1h-1zM759 598h1v1h-1zM57 603h1v1h-1zM107 603h1v1h-1zM157 603h1v1h-1zM207 603h1v1h-1zM257 603h1v1h-1zM307 603h1v1h-1zM358 603h1v1h-1zM408 603h1v1h-1zM458 603h1v1h-1zM508 603h1v1h-1zM558 603h1v1h-1zM608 603h1v1h-1zM658 603h1v1h-1zM708 603h1v1h-1zM759 603h1v1h-1z"/><path fill="url(#st)" d="M409 22h99v99h-99zM559 22h99v99h-99zM415 122h87v1h-87zM565 122h87v1h-87zM419 123h79v1h-79zM569 123h79v1h-79zM424 124h69v1h-69zM574 124h69v1h-69zM428 125h61v1h-61zM578 125h61v1h-61zM433 126h51v1h-51zM583 126h51v1h-51zM437 127h43v1h-43zM587 127h43v1h-43zM442 128h33v1h-33zM592 128h33v1h-33zM446 129h25v1h-25zM596 129h25v1h-25zM451 130h15v1h-15zM601 130h15v1h-15zM454 132h9v69h-9zM604 132h9v39h-9zM604 172h9v10h-9zM614 172h84v10h-84zM699 172h9v10h-9zM699 183h9v400h-9zM669 202h9v10h-9zM454 203h9v9h-9zM464 203h204v9h-204zM669 213h9v339h-9zM348 233h300v89h-300zM358 322h290v10h-290zM108 323h99v99h-99zM258 323h89v10h-89zM348 323h9v9h-9zM258 333h99v89h-99zM114 423h87v1h-87zM264 423h87v1h-87zM118 424h79v1h-79zM268 424h79v1h-79zM123 425h69v1h-69zM273 425h69v1h-69zM127 426h61v1h-61zM277 426h61v1h-61zM132 427h51v1h-51zM282 427h51v1h-51zM136 428h43v1h-43zM286 428h43v1h-43zM141 429h33v1h-33zM291 429h33v1h-33zM145 430h25v1h-25zM295 430h25v1h-25zM150 431h15v1h-15zM300 431h15v1h-15zM153 433h9v150h-9zM303 433h9v119h-9zM313 553h355v9h-355zM303 554h9v9h-9zM669 554h9v9h-9zM153 584h9v9h-9zM163 584h535v9h-535zM699 584h9v9h-9z"/><path fill="#008080" d="M408 21h101v1h-101zM558 21h101v1h-101zM408 22h1v99h-1zM508 22h1v99h-1zM558 22h1v99h-1zM658 22h1v99h-1zM408 121h101v1h-101zM558 121h101v1h-101zM410 122h5v1h-5zM502 122h5v1h-5zM560 122h5v1h-5zM652 122h5v1h-5zM415 123h4v1h-4zM498 123h4v1h-4zM565 123h4v1h-4zM648 123h4v1h-4zM419 124h5v1h-5zM493 124h5v1h-5zM569 124h5v1h-5zM643 124h5v1h-5zM424 125h4v1h-4zM489 125h4v1h-4zM574 125h4v1h-4zM639 125h4v1h-4zM428 126h5v1h-5zM484 126h5v1h-5zM578 126h5v1h-5zM634 126h5v1h-5zM433 127h4v1h-4zM480 127h4v1h-4zM583 127h4v1h-4zM630 127h4v1h-4zM437 128h5v1h-5zM475 128h5v1h-5zM587 128h5v1h-5zM625 128h5v1h-5zM442 129h4v1h-4zM471 129h4v1h-4zM592 129h4v1h-4zM621 129h4v1h-4zM446 130h5v1h-5zM466 130h5v1h-5zM596 130h5v1h-5zM616 130h5v1h-5zM451 131h15v1h-15zM601 131h15v1h-15zM453 132h1v69h-1zM463 132h1v69h-1zM603 132h1v39h-1zM613 132h1v39h-1zM603 171h106v1h-106zM603 172h1v10h-1zM613 172h1v10h-1zM698 172h1v10h-1zM708 172h1v10h-1zM603 182h106v1h-106zM698 183h1v400h-1zM708 183h1v400h-1zM453 201h11v1h-11zM668 201h11v1h-11zM453 202h216v1h-216zM678 202h1v10h-1zM453 203h1v9h-1zM463 203h1v9h-1zM668 203h1v9h-1zM453 212h226v1h-226zM668 213h1v339h-1zM678 213h1v339h-1zM347 232h302v1h-302zM347 233h1v89h-1zM648 233h1v99h-1zM107 322h101v1h-101zM257 322h101v1h-101zM107 323h1v99h-1zM207 323h1v99h-1zM257 323h1v99h-1zM347 323h1v9h-1zM357 323h1v9h-1zM347 332h302v1h-302zM357 333h1v89h-1zM107 422h101v1h-101zM257 422h101v1h-101zM109 423h5v1h-5zM201 423h5v1h-5zM259 423h5v1h-5zM351 423h5v1h-5zM114 424h4v1h-4zM197 424h4v1h-4zM264 424h4v1h-4zM347 424h4v1h-4zM118 425h5v1h-5zM192 425h5v1h-5zM268 425h5v1h-5zM342 425h5v1h-5zM123 426h4v1h-4zM188 426h4v1h-4zM273 426h4v1h-4zM338 426h4v1h-4zM127 427h5v1h-5zM183 427h5v1h-5zM277 427h5v1h-5zM333 427h5v1h-5zM132 428h4v1h-4zM179 428h4v1h-4zM282 428h4v1h-4zM329 428h4v1h-4zM136 429h5v1h-5zM174 429h5v1h-5zM286 429h5v1h-5zM324 429h5v1h-5zM141 430h4v1h-4zM170 430h4v1h-4zM291 430h4v1h-4zM320 430h4v1h-4zM145 431h5v1h-5zM165 431h5v1h-5zM295 431h5v1h-5zM315 431h5v1h-5zM150 432h15v1h-15zM300 432h15v1h-15zM152 433h1v150h-1zM162 433h1v150h-1zM302 433h1v119h-1zM312 433h1v119h-1zM302 552h377v1h-377zM302 553h11v1h-11zM668 553h11v1h-11zM302 554h1v9h-1zM312 554h1v8h-1zM668 554h1v8h-1zM678 554h1v9h-1zM312 562h357v1h-357zM302 563h11v1h-11zM668 563h11v1h-11zM152 583h557v1h-557zM152 584h1v9h-1zM162 584h1v9h-1zM698 584h1v9h-1zM708 584h1v9h-1zM152 593h557v1h-557z"/><path fill="#808080" d="M29 586h49v5h-49z"/><path fill="#868686" d="M28 585h101v1h-101zM28 586h1v5h-1zM78 586h1v5h-1zM128 586h1v5h-1zM28 591h101v1h-101z"/><path fill="#808080" d="M84 570h1v1h-1zM91 570h2v1h-2zM99 570h2v1h-2zM82 571h3v1h-3zM90 571h1v1h-1zM93 571h1v1h-1zM98 571h1v1h-1zM101 571h1v1h-1zM84 572h1v6h-1zM89 572h1v5h-1zM94 572h1v5h-1zM97 572h1v5h-1zM102 572h1v5h-1zM113 572h1v1h-1zM118 572h1v1h-1zM121 572h3v1h-3zM125 572h2v1h-2zM112 573h2v1h-2zM117 573h2v1h-2zM121 573h2v1h-2zM124 573h1v6h-1zM127 573h1v6h-1zM91 574h1v1h-1zM99 574h1v1h-1zM113 574h1v4h-1zM118 574h1v3h-1zM121 574h1v5h-1zM90 577h1v1h-1zM93 577h1v1h-1zM98 577h1v1h-1zM101 577h1v1h-1zM117 577h2v1h-2zM82 578h5v1h-5zM91 578h2v1h-2zM99 578h2v1h-2zM113 578h4v1h-4zM118 578h1v1h-1zM113 579h1v3h-1z"/></svg></body></html>
